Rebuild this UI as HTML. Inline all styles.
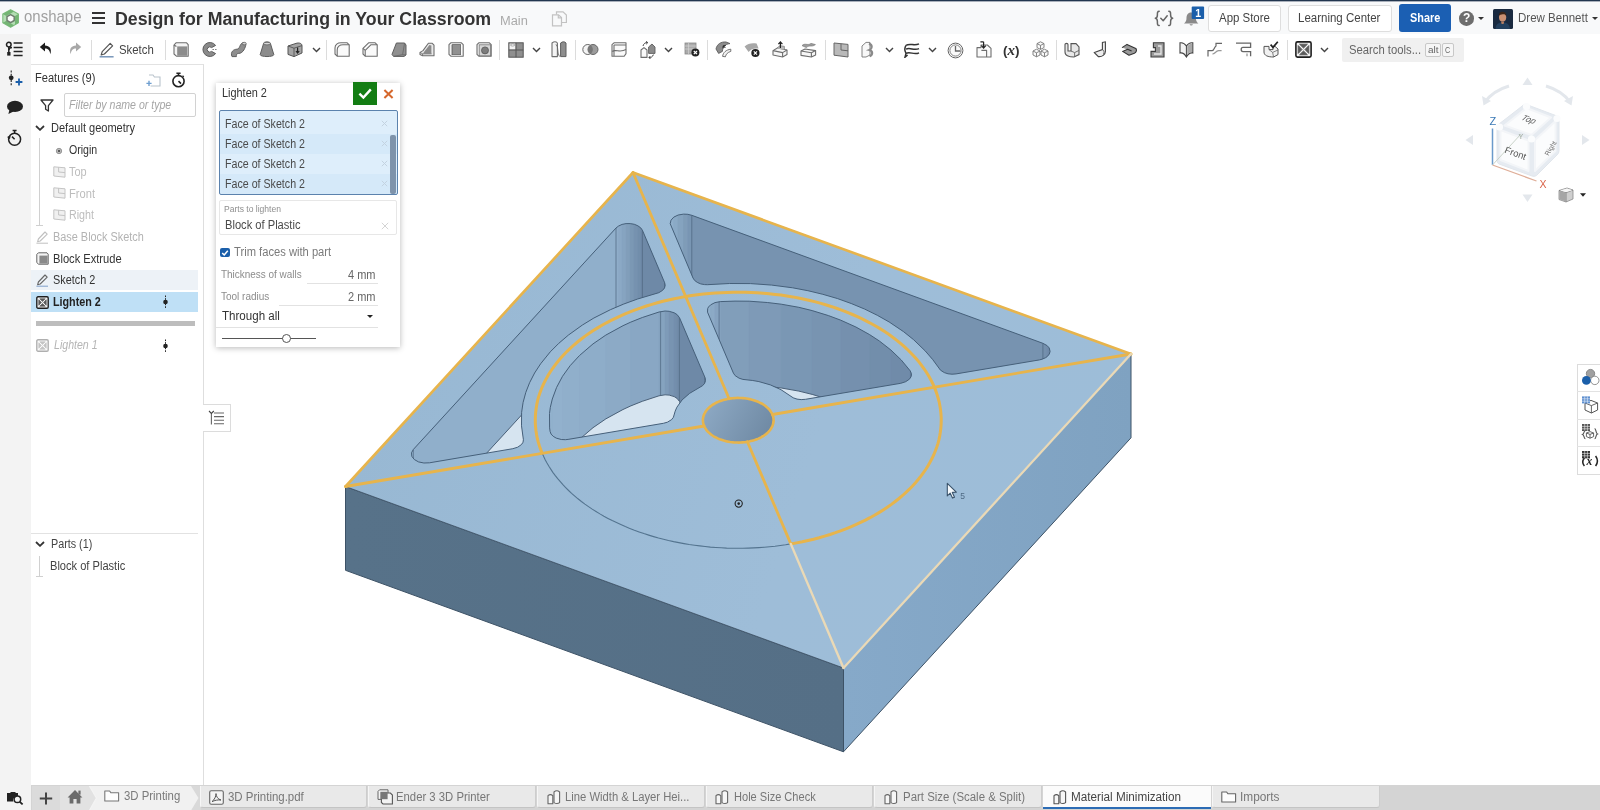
<!DOCTYPE html>
<html lang="en">
<head>
<meta charset="utf-8">
<title>Design for Manufacturing in Your Classroom</title>
<style>
*{box-sizing:border-box;margin:0;padding:0}
html,body{width:1600px;height:810px;overflow:hidden;background:#fff;font-family:"Liberation Sans",sans-serif;color:#333}
.abs{position:absolute}
#app{position:relative;width:1600px;height:810px;overflow:hidden;will-change:transform}
/* top */
#topline{left:0;top:0;width:1600px;height:2px;background:linear-gradient(#22364f 0,#22364f 1px,#a9b0bb 1px,#a9b0bb 2px)}
#topbar{left:0;top:2px;width:1600px;height:32px;background:#f8f9fa}
#toolbar{left:31px;top:34px;width:1569px;height:31px;background:#fff}
#leftcol{left:0;top:34px;width:31px;height:776px;background:#f3f3f3}
#fpanel{left:31px;top:64px;width:173px;height:721.5px;background:#fff;border-right:1.5px solid #dedede;border-top:1.5px solid #e2e2e2}
#tabbar{left:31px;top:785px;width:1569px;height:25px;background:#d4d4d4}
.t{position:absolute;white-space:nowrap;line-height:1;transform-origin:0 50%}
</style>
</head>
<body>
<div id="app">
<div class="abs" id="topline"></div>
<div class="abs" id="topbar"></div>
<div class="abs" id="leftcol"></div>
<div class="abs" id="toolbar"></div>
<div class="abs" id="fpanel"></div>
<div class="abs" id="tabbar"></div>
<svg class="abs" style="left:1.5px;top:8.5px" width="17.5" height="19" viewBox="0 0 17.5 19"><path d="M8.6,0.7 L16.4,5 L16.4,13.8 L8.6,18.3 L0.8,13.8 L0.8,5Z" fill="#b4deb4" stroke="#7dbd7d" stroke-width="1.1" stroke-linejoin="round"/><path d="M0.8,5 L8.6,0.7 L12,2.6 L4.4,7Z M16.4,5 L16.4,13.8 L13,15.8 L13,7Z M0.8,13.8 L8.6,18.3 L12,16.2 L4.4,11.8Z" fill="#74b574"/><path d="M8.6,5.6 L12.2,7.7 L12.2,11.5 L8.6,13.6 L5,11.5 L5,7.7Z" fill="#fbfbfb" stroke="#6f7f6f" stroke-width="1.5" stroke-linejoin="round"/></svg>
<span class="t" style="left:23.5px;top:7.5px;font-size:17px;color:#a0a0a0;transform:scaleX(0.882);">onshape</span>
<div class="abs" style="left:92px;top:12px;width:13px;height:2px;background:#333;box-shadow:0 5px 0 #333,0 10px 0 #333"></div>
<span class="t" style="left:115.2px;top:9.6px;font-size:18.3px;color:#333;font-weight:bold;transform:scaleX(0.971);">Design for Manufacturing in Your Classroom</span>
<span class="t" style="left:499.8px;top:14.8px;font-size:12px;color:#aaa;transform:scaleX(1.069);">Main</span>
<svg class="abs" style="left:551px;top:11px" width="17" height="16" viewBox="0 0 17 16"><g fill="none" stroke="#c2c2c2" stroke-width="1.2"><path d="M5.5,3.5 L5.5,0.8 L12,0.8 L15.4,4 L15.4,11.5 L10.5,11.5"/><path d="M1.5,3.8 L7.5,3.8 L10.5,6.6 L10.5,14.8 L1.5,14.8Z"/><path d="M7.3,4 L7.3,6.8 L10.3,6.8"/></g></svg>
<svg class="abs" style="left:1154px;top:10px" width="20" height="17" viewBox="0 0 20 17"><g fill="none" stroke="#666" stroke-width="1.5" stroke-linecap="round" stroke-linejoin="round"><path d="M5.2,1.2 C3.2,1.2 3.4,3 3.4,5 C3.4,7 3,8 1.4,8.3 C3,8.6 3.4,9.6 3.4,11.6 C3.4,13.6 3.2,15.6 5.2,15.6"/><path d="M14.8,1.2 C16.8,1.2 16.6,3 16.6,5 C16.6,7 17,8 18.6,8.3 C17,8.6 16.6,9.6 16.6,11.6 C16.6,13.6 16.8,15.6 14.8,15.6"/><path d="M6.8,8.2 L9.2,10.8 L13.2,5.8"/></g></svg>
<svg class="abs" style="left:1183px;top:6px" width="23" height="21" viewBox="0 0 23 21"><path d="M8.2,6.5 C11.6,6.5 12.9,9 12.9,12 C12.9,15 13.8,16.2 15.4,17.4 L1,17.4 C2.6,16.2 3.5,15 3.5,12 C3.5,9 4.8,6.5 8.2,6.5Z" fill="#8a8a8a"/><path d="M6.5,18.2 A1.8,1.8 0 0 0 9.9,18.2Z" fill="#8a8a8a"/><rect x="8.7" y="0.5" width="12.4" height="12.6" rx="1" fill="#1b5faa"/></svg>
<span class="t" style="left:1195.3px;top:7.7px;font-size:10.5px;color:#fff;font-weight:bold;">1</span>
<div class="abs" style="left:1208px;top:4.5px;width:73px;height:27px;background:#fff;border:1px solid #dedede;border-radius:3px"></div>
<span class="t" style="left:1219.1px;top:11.7px;font-size:12px;color:#444;transform:scaleX(0.954);">App Store</span>
<div class="abs" style="left:1288px;top:4.5px;width:104px;height:27px;background:#fff;border:1px solid #dedede;border-radius:3px"></div>
<span class="t" style="left:1298.4px;top:11.7px;font-size:12px;color:#444;transform:scaleX(0.958);">Learning Center</span>
<div class="abs" style="left:1399px;top:4px;width:51.5px;height:28px;background:#1b5fb3;border-radius:3px"></div>
<span class="t" style="left:1409.7px;top:11.6px;font-size:12px;color:#fff;font-weight:bold;transform:scaleX(0.906);">Share</span>
<div class="abs" style="left:1459px;top:11px;width:14.6px;height:14.6px;border-radius:50%;background:#6d6d6d"></div>
<span class="t" style="left:1462.9px;top:12.4px;font-size:12px;color:#fff;font-weight:bold;">?</span>
<div class="abs" style="left:1478px;top:17px;border:3px solid transparent;border-top:3.4px solid #333;border-bottom:0"></div>
<svg class="abs" style="left:1492.6px;top:8.5px" width="20" height="20" viewBox="0 0 20 20"><rect width="20" height="20" rx="1.5" fill="#1a2a40"/><ellipse cx="9.6" cy="8.2" rx="3.6" ry="4.4" fill="#c98f72"/><path d="M5.8,7 C5.6,3.4 8,2.6 10,2.8 C12.4,3 13.6,4.6 13.3,7.2 C12.6,5.6 11.6,5 9.8,5.2 C8,5.3 6.6,5.6 5.8,7Z" fill="#3a2418"/><path d="M2.5,20 C2.8,15 5.6,13.6 9.6,13.6 C13.6,13.6 16.4,15 17,20Z" fill="#24405e"/><path d="M8,12.4 L11.2,12.4 L10.6,15 L8.6,15Z" fill="#b57d62"/></svg>
<span class="t" style="left:1517.6px;top:11.5px;font-size:12px;color:#555;transform:scaleX(0.961);">Drew Bennett</span>
<div class="abs" style="left:1592px;top:17px;border:3.3px solid transparent;border-top:3.6px solid #333;border-bottom:0"></div>
<svg class="abs" style="left:5px;top:41px" width="19" height="16" viewBox="0 0 19 16"><g fill="none" stroke="#222" stroke-width="1.5"><circle cx="3.8" cy="3.6" r="2.3"/><path d="M3.8,6 L3.8,11.2"/><path d="M3.8,9 C3.8,7 5,6.6 7,6.6"/><path d="M8.6,2 L17.6,2 M8.6,6.6 L17.6,6.6 M8.6,10.6 L17.6,10.6 M8.6,14.4 L17.6,14.4"/></g><rect x="2.2" y="11" width="3.3" height="3.6" fill="#222"/></svg>
<svg class="abs" style="left:7px;top:69px" width="17" height="19" viewBox="0 0 17 19"><circle cx="4.2" cy="8.8" r="2.4" fill="#222"/><path d="M4.2,1.5 L4.2,17.5" stroke="#222" stroke-width="1.1" stroke-dasharray="2 1.2"/><path d="M12,9.6 L12,16.4 M8.6,13 L15.4,13" stroke="#1b5faa" stroke-width="1.8"/></svg>
<svg class="abs" style="left:6px;top:99.5px" width="18" height="15" viewBox="0 0 18 15"><ellipse cx="9" cy="6.4" rx="8" ry="5.6" fill="#222"/><path d="M3.5,9.5 L2.4,14 L8,11.2Z" fill="#222"/></svg>
<svg class="abs" style="left:6px;top:129px" width="17" height="18" viewBox="0 0 17 18"><g fill="none" stroke="#222" stroke-width="1.5"><circle cx="8.6" cy="10.2" r="6"/><path d="M6.6,1.6 L10.6,1.6 M8.6,1.6 L8.6,4 M8.6,10.2 L6,7.6"/></g><path d="M1,8 L4.6,6.4 L4,10.2Z" fill="#222"/></svg>
<svg class="abs" style="left:39px;top:42px" width="14" height="13" viewBox="0 0 14 13"><path d="M6,0.6 L0.8,5 L6,9.4 L6,6.6 C9,6.6 10.6,8 11.4,12.2 C13,6.6 10.6,3.6 6,3.4Z" fill="#1c1c1c"/></svg>
<svg class="abs" style="left:68px;top:42px" width="14" height="13" viewBox="0 0 14 13"><path d="M8,0.6 L13.2,5 L8,9.4 L8,6.6 C5,6.6 3.4,8 2.6,12.2 C1,6.6 3.4,3.6 8,3.4Z" fill="#a8a8a8"/></svg>
<div class="abs" style="left:90.5px;top:40px;width:1px;height:20px;background:#dcdcdc"></div>
<svg class="abs" style="left:99px;top:42px" width="16" height="16" viewBox="0 0 16 16"><g fill="none" stroke="#555" stroke-width="1.2" stroke-linejoin="round"><path d="M11.2,1.4 L13.6,3.8 L5.4,12 L2.2,13 L3.2,9.6Z"/></g><path d="M0.6,14.8 L14.6,14.8" stroke="#6f8fb5" stroke-width="1.4"/></svg>
<span class="t" style="left:118.6px;top:43.6px;font-size:12px;color:#444;transform:scaleX(0.949);">Sketch</span>
<div class="abs" style="left:165px;top:40px;width:1px;height:20px;background:#dcdcdc"></div>
<svg class="abs" style="left:173px;top:42px" width="16" height="15" viewBox="0 0 16 15"><path d="M1,3 L3,0.8 L13.6,0.8 L15.2,2.6 L15.2,14.2 L3.4,14.2 L1,12Z" fill="#f4f4f4" fill="none" stroke="#6e6e6e" stroke-width="1.1" stroke-linejoin="round"/><rect x="4.2" y="4.4" width="10" height="9.4" fill="#8c8c8c"/><path d="M1,3 L3.4,4.4" fill="none" stroke="#6e6e6e" stroke-width="1.1" stroke-linejoin="round"/></svg>
<svg class="abs" style="left:202px;top:42px" width="16" height="15" viewBox="0 0 16 15"><path d="M13.6,3.4 A7,7 0 1 0 13.6,11.6 L9.6,9.4 A2.6,2.6 0 1 1 9.6,5.6Z" fill="#8a8a8a" stroke="#5c5c5c" stroke-width="1"/><path d="M10.4,7.5 L15.4,7.5" stroke="#777" stroke-width="0.9" stroke-dasharray="1.6 1"/></svg>
<svg class="abs" style="left:230px;top:41px" width="17" height="17" viewBox="0 0 17 17"><path d="M2,15.6 C0,11 3.6,8.2 7,8.2 C10,8.2 9.4,3.2 12.6,1.8 L16,3.2 C15.4,6.2 13.4,12.4 8.6,12.4 C6.6,12.4 6.2,14 6.4,15.6Z" fill="#8e8e8e" stroke="#5e5e5e" stroke-width="1"/><ellipse cx="14.2" cy="2.6" rx="2" ry="1.3" fill="#cfcfcf" stroke="#5e5e5e" stroke-width="0.8"/></svg>
<svg class="abs" style="left:259px;top:41px" width="16" height="17" viewBox="0 0 16 17"><path d="M4.6,2.4 C4.6,0.4 11.4,0.4 11.4,2.4 L14.8,13.6 C14.8,16.2 1.2,16.2 1.2,13.6Z" fill="#8c8c8c" stroke="#5e5e5e" stroke-width="1"/><ellipse cx="8" cy="2.6" rx="3.3" ry="1.3" fill="#d9d9d9" stroke="#5e5e5e" stroke-width="0.8"/></svg>
<svg class="abs" style="left:287px;top:41px" width="16" height="17" viewBox="0 0 16 17"><path d="M1,5 L9,2.4 C12,1.4 15,2.4 15,4.6 L15,12 L7,15.6 L1,13.4Z" fill="#a5a5a5" stroke="#555" stroke-width="1"/><path d="M1,5 L7,7.2 L15,4.6 M7,7.2 L7,15.6" fill="none" stroke="#555" stroke-width="0.9"/><path d="M10.6,6.6 L10.6,11.6 M9,10 L10.6,12 L12.2,10" fill="none" stroke="#222" stroke-width="1.2"/></svg>
<svg class="abs" style="left:311.5px;top:47px" width="9" height="6" viewBox="0 0 9 6"><path d="M1,1 L4.5,4.6 L8,1" fill="none" stroke="#444" stroke-width="1.4"/></svg>
<div class="abs" style="left:325.5px;top:40px;width:1px;height:20px;background:#dcdcdc"></div>
<svg class="abs" style="left:333.5px;top:42px" width="16" height="15" viewBox="0 0 16 15"><path d="M1,6 C1,2.6 3.6,0.8 7,0.8 L13.2,0.8 L15.2,2.8 L15.2,14.2 L3.2,14.2 L1,12Z" fill="#fafafa" fill="none" stroke="#6e6e6e" stroke-width="1.1" stroke-linejoin="round"/><path d="M3.2,14.2 L3.2,8 C3.2,4.6 5.6,2.8 9,2.8 L15.2,2.8" fill="none" stroke="#6e6e6e" stroke-width="1.1" stroke-linejoin="round"/></svg>
<svg class="abs" style="left:362px;top:42px" width="16" height="15" viewBox="0 0 16 15"><path d="M1,6.4 L6.6,0.8 L13.2,0.8 L15.2,2.8 L15.2,14.2 L3.2,14.2 L1,12Z" fill="#fafafa" fill="none" stroke="#6e6e6e" stroke-width="1.1" stroke-linejoin="round"/><path d="M3.2,14.2 L3.2,8.4 L8.8,2.8 L15.2,2.8 M1,6.4 L3.2,8.4" fill="none" stroke="#6e6e6e" stroke-width="1.1" stroke-linejoin="round"/></svg>
<svg class="abs" style="left:391px;top:42px" width="16" height="15" viewBox="0 0 16 15"><path d="M5.4,1 L13.6,1 L15,3 L15,13 L13,14.4 L2.6,14.4 L1,12.4Z" fill="#909090" stroke="#5e5e5e" stroke-width="1"/><path d="M13.6,1 L11.6,12.6 L2.6,14.4 M11.6,12.6 L15,13" fill="none" stroke="#666" stroke-width="0.8"/></svg>
<svg class="abs" style="left:419px;top:42px" width="16" height="15" viewBox="0 0 16 15"><path d="M1,10.4 L4,8.6 L9.4,1.2 L13,1.2 L15,3.2 L15,13.8 L3.6,13.8 L1,12.4Z" fill="#e9e9e9" fill="none" stroke="#6e6e6e" stroke-width="1.1" stroke-linejoin="round"/><path d="M4.6,10.4 L10.4,3 L12.4,3.4 L12.4,11.6 L4.6,11.6Z" fill="#8a8a8a"/><path d="M1,10.4 L3.6,11.8 L3.6,13.8 M3.6,11.8 L12.6,11.8" fill="none" stroke="#666" stroke-width="0.8"/></svg>
<svg class="abs" style="left:447.5px;top:42px" width="16" height="15" viewBox="0 0 16 15"><path d="M1,2.6 L2.8,0.8 L13.4,0.8 L15.2,2.6 L15.2,14.2 L2.8,14.2 L1,12.4Z" fill="#fafafa" fill="none" stroke="#6e6e6e" stroke-width="1.1" stroke-linejoin="round"/><rect x="4.4" y="2.6" width="8.2" height="10" fill="#909090" stroke="#666" stroke-width="0.8"/><path d="M3.4,2.6 L3.4,13.2" stroke="#999" stroke-width="0.8"/></svg>
<svg class="abs" style="left:475.5px;top:42px" width="16" height="15" viewBox="0 0 16 15"><path d="M1,2.6 L2.8,0.8 L13.4,0.8 L15.2,2.6 L15.2,14.2 L2.8,14.2 L1,12.4Z" fill="#f2f2f2" fill="none" stroke="#6e6e6e" stroke-width="1.1" stroke-linejoin="round"/><rect x="3.2" y="2.8" width="11.4" height="11" fill="#d5d5d5" stroke="#777" stroke-width="0.8"/><circle cx="9" cy="8.4" r="3.5" fill="#7c7c7c" stroke="#555" stroke-width="0.8"/></svg>
<div class="abs" style="left:498.5px;top:40px;width:1px;height:20px;background:#dcdcdc"></div>
<svg class="abs" style="left:508px;top:41.5px" width="16" height="16" viewBox="0 0 16 16"><rect x="0.8" y="0.8" width="14.4" height="14.4" fill="#8f8f8f" stroke="#555" stroke-width="1"/><rect x="1.6" y="1.6" width="6" height="6" fill="#f2f2f2"/><path d="M8,0.8 L8,15.2 M0.8,8 L15.2,8" stroke="#555" stroke-width="1"/><ellipse cx="4.6" cy="3" rx="2.2" ry="1" fill="#fff" stroke="#777" stroke-width="0.6"/></svg>
<svg class="abs" style="left:532px;top:47px" width="9" height="6" viewBox="0 0 9 6"><path d="M1,1 L4.5,4.6 L8,1" fill="none" stroke="#444" stroke-width="1.4"/></svg>
<svg class="abs" style="left:551px;top:41px" width="16" height="17" viewBox="0 0 16 17"><path d="M1,2 C3,0.4 5,0.4 6.4,2 L6.4,15.6 L1,15.6Z" fill="#f4f4f4" fill="none" stroke="#6e6e6e" stroke-width="1.1" stroke-linejoin="round"/><path d="M9.6,2 C11.6,0.4 13.6,0.4 15,2 L15,15.6 L9.6,15.6Z" fill="#8e8e8e" stroke="#5e5e5e" stroke-width="1"/><path d="M5,3.4 C8,6 5.6,11 8.4,15.6" fill="none" stroke="#666" stroke-width="0.9"/></svg>
<div class="abs" style="left:575px;top:40px;width:1px;height:20px;background:#dcdcdc"></div>
<svg class="abs" style="left:582px;top:43px" width="17" height="13" viewBox="0 0 17 13"><circle cx="5.8" cy="6.5" r="5" fill="#f4f4f4" stroke="#666" stroke-width="1"/><circle cx="11" cy="6.5" r="5" fill="#9c9c9c" stroke="#666" stroke-width="1"/><path d="M8.4,2.2 A5,5 0 0 1 8.4,10.8 A5,5 0 0 1 8.4,2.2Z" fill="#777"/></svg>
<svg class="abs" style="left:611px;top:42px" width="16" height="15" viewBox="0 0 16 15"><path d="M1,2.6 L3,0.8 L15,0.8 L15,11.6 L13.2,14.2 L1,14.2Z" fill="#fafafa" fill="none" stroke="#6e6e6e" stroke-width="1.1" stroke-linejoin="round"/><path d="M3,3 L15,3 M3,3 L3,14 M1,9.4 C5,7 9,11 15,7.6" fill="none" stroke="#6e6e6e" stroke-width="1.1" stroke-linejoin="round"/></svg>
<svg class="abs" style="left:639.5px;top:40.5px" width="16" height="18" viewBox="0 0 16 18"><path d="M1,9 L1,16.4 L7,16.4 L7,9 L4,6.6Z" fill="#fafafa" fill="none" stroke="#6e6e6e" stroke-width="1.1" stroke-linejoin="round"/><path d="M8.6,6 L12,3 L15,6 L15,12.4 L8.6,12.4Z" fill="#8c8c8c" stroke="#5e5e5e" stroke-width="0.9"/><path d="M3,5 C3.6,2.6 5.4,1.4 7.4,1.6 M6,0.4 L7.8,1.6 L6.2,3.2 M13.4,13.6 C12.8,15.6 11,16.8 9,16.6 M10.6,17.8 L8.8,16.6 L10.4,15" fill="none" stroke="#444" stroke-width="1"/></svg>
<svg class="abs" style="left:664px;top:47px" width="9" height="6" viewBox="0 0 9 6"><path d="M1,1 L4.5,4.6 L8,1" fill="none" stroke="#444" stroke-width="1.4"/></svg>
<svg class="abs" style="left:683.5px;top:42px" width="16" height="15" viewBox="0 0 16 15"><rect x="1" y="1" width="11" height="11" fill="#ababab" stroke="#888" stroke-width="0.8"/><path d="M1,4 L12,4 M1,7 L12,7 M4.6,1 L4.6,12" stroke="#d5d5d5" stroke-width="0.7"/><circle cx="11.4" cy="10.6" r="4" fill="#222"/><path d="M9.8,9 L13,12.2 M13,9 L9.8,12.2" stroke="#fff" stroke-width="1.2"/></svg>
<div class="abs" style="left:706.5px;top:40px;width:1px;height:20px;background:#dcdcdc"></div>
<svg class="abs" style="left:714.5px;top:41px" width="17" height="17" viewBox="0 0 17 17"><path d="M1,8 C2,3 6,0.6 11,1 L15,2.6 C10,3 7.6,6 7.4,10.4 L3.6,12.4Z" fill="#8c8c8c" stroke="#5e5e5e" stroke-width="0.9"/><path d="M7.6,15.4 C8,11.6 11,8.8 15.8,8.2 L15.8,10.4 C12.6,11.4 11,13 10.4,15.8Z" fill="#f2f2f2" stroke="#666" stroke-width="0.9"/><path d="M8.4,5 L10.4,7 M8,7.4 L8.2,4.8 L10.8,4.6" fill="none" stroke="#222" stroke-width="1"/></svg>
<svg class="abs" style="left:743.5px;top:41.5px" width="16" height="16" viewBox="0 0 16 16"><path d="M0.6,4.6 C4,1.4 8,0.8 12.6,1.6 L14.6,6.6 C10,6 7,7 4.6,10Z" fill="#a8a8a8"/><circle cx="11.4" cy="11" r="4.1" fill="#222"/><path d="M9.8,9.4 L13,12.6 M13,9.4 L9.8,12.6" stroke="#fff" stroke-width="1.2"/></svg>
<svg class="abs" style="left:772px;top:41px" width="16" height="17" viewBox="0 0 16 17"><path d="M1,9.6 L5.4,7 L15,9 L15,13.6 L10.6,16 L1,14Z" fill="#f6f6f6" fill="none" stroke="#6e6e6e" stroke-width="1.1" stroke-linejoin="round"/><path d="M1,9.6 L10.6,11.6 L15,9 M10.6,11.6 L10.6,16" fill="none" stroke="#6e6e6e" stroke-width="1.1" stroke-linejoin="round"/><path d="M4.6,7.4 L8,4.6 L12.4,5.4 L12.4,8.4" fill="#bbb" stroke="#777" stroke-width="0.7"/><path d="M8.4,7 L8.4,1.4 M6.4,3.2 L8.4,1 L10.4,3.2" fill="none" stroke="#222" stroke-width="1.2"/></svg>
<svg class="abs" style="left:799.5px;top:41px" width="17" height="17" viewBox="0 0 17 17"><path d="M1,10 L5,8 L15.6,9.6 L15.6,14 L11.4,16 L1,14.4Z" fill="#f6f6f6" fill="none" stroke="#6e6e6e" stroke-width="1.1" stroke-linejoin="round"/><path d="M1,10 L11.4,11.8 L15.6,9.6 M11.4,11.8 L11.4,16" fill="none" stroke="#6e6e6e" stroke-width="1.1" stroke-linejoin="round"/><path d="M2,4.6 C5,1.6 8,5 11,2.4 L15.4,3.6 C12,6.4 9,3.6 6.4,6.6Z" fill="#9d9d9d" stroke="#777" stroke-width="0.7"/></svg>
<div class="abs" style="left:824.5px;top:40px;width:1px;height:20px;background:#dcdcdc"></div>
<svg class="abs" style="left:832.5px;top:41.5px" width="16" height="16" viewBox="0 0 16 16"><path d="M1,1 L15,2.4 L15,15 L1,13.2Z" fill="#b9b9b9" stroke="#666" stroke-width="1"/><path d="M8,1.8 L8,8 L15,8.8" fill="none" stroke="#666" stroke-width="1"/></svg>
<svg class="abs" style="left:861px;top:41px" width="14" height="17" viewBox="0 0 14 17"><path d="M1,5 L5,1.4 L9,1.4 L9,14 L5,16 L1,16Z" fill="#f8f8f8" stroke="#777" stroke-width="0.9"/><path d="M8,2.6 C12,4 11,8 8.4,9 C12,10 12,13.6 8.6,15.4" fill="none" stroke="#8a8a8a" stroke-width="2.2"/></svg>
<svg class="abs" style="left:884.5px;top:47px" width="9" height="6" viewBox="0 0 9 6"><path d="M1,1 L4.5,4.6 L8,1" fill="none" stroke="#444" stroke-width="1.4"/></svg>
<svg class="abs" style="left:903.5px;top:41.5px" width="16" height="16" viewBox="0 0 16 16"><g fill="none" stroke="#333" stroke-width="1.5"><path d="M2,3.4 C6,0.6 10,4.4 15,1.8"/><path d="M2,7.2 C6,5 10,9 15,6.6"/><path d="M2,11.4 C6,9 10,13.4 15,10.8"/><path d="M2,3.4 C0.4,6 0.6,9 2,11.4 L1,15.2 L3.6,13"/></g></svg>
<svg class="abs" style="left:928px;top:47px" width="9" height="6" viewBox="0 0 9 6"><path d="M1,1 L4.5,4.6 L8,1" fill="none" stroke="#444" stroke-width="1.4"/></svg>
<svg class="abs" style="left:946.5px;top:41.5px" width="17" height="17" viewBox="0 0 17 17"><circle cx="8.5" cy="8.5" r="7.4" fill="#fafafa" stroke="#666" stroke-width="1"/><circle cx="8.5" cy="8.5" r="5.6" fill="none" stroke="#777" stroke-width="0.9"/><path d="M8.5,4 L8.5,9 L13.4,9" fill="none" stroke="#666" stroke-width="1.3"/></svg>
<svg class="abs" style="left:976px;top:41px" width="16" height="17" viewBox="0 0 16 17"><path d="M1,6.6 L5,6.6 L5,4 L11.4,4 L15,7.4 L15,16 L1,16Z" fill="#fafafa" fill="none" stroke="#6e6e6e" stroke-width="1.1" stroke-linejoin="round"/><path d="M5.4,9.4 L10.6,9.4 L10.6,16" fill="none" stroke="#6e6e6e" stroke-width="1.1" stroke-linejoin="round"/><path d="M4.4,0.8 L7.6,0.8 M7.6,0.8 L7.6,6.4 M5.4,4.6 L7.6,7 L9.8,4.6" fill="none" stroke="#222" stroke-width="1.2"/></svg>
<span class="t" style="left:1003px;top:42.5px;font-size:13.5px;color:#333;font-weight:bold">(<i style="font-family:'Liberation Serif',serif;font-size:15px">x</i>)</span>
<svg class="abs" style="left:1031.5px;top:41px" width="17" height="17" viewBox="0 0 17 17"><g fill="#fafafa" stroke="#777" stroke-width="0.9" stroke-linejoin="round"><path d="M8.5,0.8 L12,2.6 L12,6.6 L8.5,8.4 L5,6.6 L5,2.6Z"/><path d="M4.5,8.2 L8,10 L8,14 L4.5,15.8 L1,14 L1,10Z"/><path d="M12.5,8.2 L16,10 L16,14 L12.5,15.8 L9,14 L9,10Z"/><path d="M5,2.6 L8.5,4.4 L12,2.6 M8.5,4.4 L8.5,8.4 M1,10 L4.5,11.8 L8,10 M4.5,11.8 L4.5,15.8 M9,10 L12.5,11.8 L16,10 M12.5,11.8 L12.5,15.8" fill="none"/></g></svg>
<div class="abs" style="left:1056px;top:40px;width:1px;height:20px;background:#dcdcdc"></div>
<svg class="abs" style="left:1063.5px;top:41.5px" width="16" height="16" viewBox="0 0 16 16"><path d="M1,2.4 C1,1 4,1 4,2.4 L4,9 L7,9 L7,1.6 L12,1.6 L15,5 L15,12.6 L10,15 C6,15 1,14 1,10Z" fill="#e8e8e8" stroke="#555" stroke-width="1.1"/><path d="M7,9 L10.6,10.6 L15,8.4 M10.6,10.6 L10.6,14.8" fill="none" stroke="#666" stroke-width="0.9"/></svg>
<svg class="abs" style="left:1092.5px;top:41px" width="16" height="17" viewBox="0 0 16 17"><path d="M1.4,11.6 L9.4,8.6 L9.4,1.4 L12.4,0.8 L12.4,10.6 C12.4,13.6 9,16 5.4,15.6Z" fill="#ededed" stroke="#444" stroke-width="1.1"/><path d="M9.4,8.6 C11,9.4 11.4,11 10.6,13" fill="none" stroke="#555" stroke-width="0.9"/></svg>
<svg class="abs" style="left:1121px;top:43px" width="16" height="13" viewBox="0 0 16 13"><path d="M1,4.6 L6,1.4 L14.8,5.4 C16,7 15.4,9.4 13.4,10.2 L8,12.2 L1.6,8.4 L6.6,6.2 L10.6,8" fill="#9a9a9a" stroke="#333" stroke-width="1.1" stroke-linejoin="round"/></svg>
<svg class="abs" style="left:1150px;top:41.5px" width="15" height="16" viewBox="0 0 15 16"><path d="M3.4,0.8 L14,0.8 L14,15 L1,15 L1,9.4 L5.4,9.4 L5.4,5.6 L3.4,5.6Z" fill="#9a9a9a" stroke="#3c3c3c" stroke-width="1.1"/><path d="M8,4 L11,4 L11,12 L4,12" fill="none" stroke="#e8e8e8" stroke-width="1.3"/></svg>
<svg class="abs" style="left:1178.5px;top:41px" width="15" height="17" viewBox="0 0 15 17"><path d="M7.4,5 C5.4,2 3,1.4 1,1.8 L1,12 C3.4,11.6 5.6,12.6 7.4,16 C9.2,12.6 11.4,11.6 13.8,12 L13.8,1.8 C11.8,1.4 9.4,2 7.4,5Z" fill="#f3f3f3" stroke="#444" stroke-width="1.1"/><path d="M7.4,5 L7.4,16" stroke="#444" stroke-width="1"/><path d="M8.2,5.6 C9.6,3.6 11.4,2.6 13,2.6 L13,11 C11.2,11 9.6,12 8.2,14Z" fill="#a9a9a9"/></svg>
<svg class="abs" style="left:1206.5px;top:42px" width="16" height="15" viewBox="0 0 16 15"><g fill="none" stroke="#666" stroke-width="1.2"><path d="M1,14.4 L1,8.6 L5,8.6 C7.6,8.6 7,5 9,4 L9,1.4 L15,1.4"/><path d="M5.4,12 C8,12 8.6,9 11.6,8.6 L14.6,8.6" stroke="#999"/></g></svg>
<svg class="abs" style="left:1234.5px;top:42px" width="17" height="15" viewBox="0 0 17 15"><g fill="none" stroke="#666" stroke-width="1.3"><path d="M1,1.2 L15.6,1.2 L15.6,5.4 L8,5.4 C5.6,5.4 5.6,9.6 8,9.6 L15.6,9.6 L15.6,14.2"/><path d="M12,14.2 L12,11.6" stroke="#999"/></g></svg>
<svg class="abs" style="left:1263px;top:41px" width="16" height="17" viewBox="0 0 16 17"><path d="M1,5.4 L6,5.4 L6,8.6 L10,8.6 L10,5.4 L12,5.4 L15,8 L15,13.6 L10.6,16 C5,16 1,14.6 1,11Z" fill="#f1f1f1" stroke="#555" stroke-width="1"/><path d="M6,8.6 L9.6,11.4 L15,9 M9.6,11.4 L10.6,16" fill="none" stroke="#666" stroke-width="0.8"/><path d="M7.6,3.6 L10,6.4 L14.8,0.8" fill="none" stroke="#222" stroke-width="1.7"/></svg>
<div class="abs" style="left:1286.5px;top:40px;width:1px;height:20px;background:#dcdcdc"></div>
<svg class="abs" style="left:1294.5px;top:41px" width="17" height="17" viewBox="0 0 17 17"><rect x="0.9" y="0.9" width="15.2" height="15.2" rx="1.6" fill="#f4f4f4" stroke="#1e1e1e" stroke-width="1.6"/><path d="M4.6,3.2 L12.4,3.2 L8.5,7Z M4.6,13.8 L12.4,13.8 L8.5,10Z M3.2,4.6 L3.2,12.4 L7,8.5Z M13.8,4.6 L13.8,12.4 L10,8.5Z" fill="#5a5a5a" stroke="#5a5a5a" stroke-width="1" stroke-linejoin="round"/></svg>
<svg class="abs" style="left:1319.5px;top:47px" width="9" height="6" viewBox="0 0 9 6"><path d="M1,1 L4.5,4.6 L8,1" fill="none" stroke="#444" stroke-width="1.4"/></svg>
<div class="abs" style="left:1341.5px;top:37.5px;width:122px;height:24.5px;background:#f0f0f0;border-radius:2px"></div>
<span class="t" style="left:1349.3px;top:44.0px;font-size:12px;color:#666;transform:scaleX(0.939);">Search tools...</span>
<div class="abs" style="left:1424.5px;top:43px;width:16.5px;height:14px;border:1px solid #c8c8c8;border-radius:2px;background:#f6f6f6"></div>
<span class="t" style="left:1427.6px;top:45.6px;font-size:8.5px;color:#666;transform:scaleX(1.181);">alt</span>
<div class="abs" style="left:1441.5px;top:43px;width:12.5px;height:14px;border:1px solid #c8c8c8;border-radius:2px;background:#f6f6f6"></div>
<span class="t" style="left:1445.4px;top:45.8px;font-size:8.5px;color:#666;transform:scaleX(0.847);">C</span>
<span class="t" style="left:34.8px;top:72.2px;font-size:12px;color:#333;transform:scaleX(0.924);">Features (9)</span>
<svg class="abs" style="left:144.5px;top:73.5px" width="16" height="13" viewBox="0 0 16 13"><path d="M4,1 L8,1 L9.4,3 L15,3 L15,12 L5.6,12" fill="none" stroke="#b9c3cc" stroke-width="1.1"/><path d="M4,6.8 L4,12 M1.4,9.4 L6.6,9.4" stroke="#6f9fd0" stroke-width="1.4"/></svg>
<svg class="abs" style="left:170.5px;top:71.5px" width="15" height="16" viewBox="0 0 15 16"><g fill="none" stroke="#222" stroke-width="1.6"><circle cx="7.5" cy="9.2" r="5.6"/><path d="M5.4,1.2 L9.6,1.2 M7.5,1.4 L7.5,3.6 M7.5,9.2 L10,11.6"/><path d="M11.6,3.6 L12.8,4.8" stroke-width="1.2"/></g></svg>
<svg class="abs" style="left:40px;top:98.5px" width="14" height="13" viewBox="0 0 14 13"><path d="M1,1 L13,1 L8.4,6.6 L8.4,12 L5.6,10.2 L5.6,6.6Z" fill="none" stroke="#333" stroke-width="1.3" stroke-linejoin="round"/></svg>
<div class="abs" style="left:64px;top:92.5px;width:132px;height:24.5px;border:1px solid #d2d2d2;border-radius:2px;background:#fff"></div>
<span class="t" style="left:68.8px;top:98.8px;font-size:12px;color:#a6a6a6;font-style:italic;transform:scaleX(0.881);">Filter by name or type</span>
<svg class="abs" style="left:35.2px;top:125px" width="10" height="6" viewBox="0 0 10 6"><path d="M1,1 L5,4.8 L9,1" fill="none" stroke="#333" stroke-width="1.8"/></svg>
<span class="t" style="left:51.0px;top:122.4px;font-size:12px;color:#333;transform:scaleX(0.919);">Default geometry</span>
<div class="abs" style="left:38.5px;top:138px;width:1px;height:88px;background:#d0d0d0"></div><div class="abs" style="left:36px;top:225px;width:7px;height:1px;background:#d0d0d0"></div>
<svg class="abs" style="left:55px;top:146.5px" width="8" height="8" viewBox="0 0 8 8"><circle cx="4" cy="4" r="2.7" fill="#bbb" stroke="#888" stroke-width="0.8"/><circle cx="4" cy="4" r="1.1" fill="#444"/></svg>
<span class="t" style="left:69.4px;top:143.9px;font-size:12px;color:#333;transform:scaleX(0.881);">Origin</span>
<svg class="abs" style="left:52.5px;top:165.5px" width="13" height="12" viewBox="0 0 13 12"><path d="M0.8,0.8 L12,1.8 L12,11.2 L0.8,10Z" fill="#f0f0f0" stroke="#c4c4c4" stroke-width="1"/><path d="M5.6,1.2 L5.6,6 L12,6.6" fill="none" stroke="#c4c4c4" stroke-width="1"/></svg>
<span class="t" style="left:69.4px;top:165.5px;font-size:12px;color:#bdbdbd;transform:scaleX(0.910);">Top</span>
<svg class="abs" style="left:52.5px;top:187.4px" width="13" height="12" viewBox="0 0 13 12"><path d="M0.8,0.8 L12,1.8 L12,11.2 L0.8,10Z" fill="#f0f0f0" stroke="#c4c4c4" stroke-width="1"/><path d="M5.6,1.2 L5.6,6 L12,6.6" fill="none" stroke="#c4c4c4" stroke-width="1"/></svg>
<span class="t" style="left:69.4px;top:187.5px;font-size:12px;color:#bdbdbd;transform:scaleX(0.928);">Front</span>
<svg class="abs" style="left:52.5px;top:209.3px" width="13" height="12" viewBox="0 0 13 12"><path d="M0.8,0.8 L12,1.8 L12,11.2 L0.8,10Z" fill="#f0f0f0" stroke="#c4c4c4" stroke-width="1"/><path d="M5.6,1.2 L5.6,6 L12,6.6" fill="none" stroke="#c4c4c4" stroke-width="1"/></svg>
<span class="t" style="left:69.4px;top:209.4px;font-size:12px;color:#bdbdbd;transform:scaleX(0.892);">Right</span>
<svg class="abs" style="left:36px;top:230.5px" width="13" height="13" viewBox="0 0 13 13"><path d="M9,1 L11.2,3.2 L4.2,10 L1.6,10.8 L2.4,8Z" fill="none" stroke="#c0c0c0" stroke-width="1.1" stroke-linejoin="round"/><path d="M0.4,12.2 L12,12.2" stroke="#c0c0c0" stroke-width="1"/></svg>
<span class="t" style="left:53.0px;top:231.0px;font-size:12px;color:#b3b3b3;transform:scaleX(0.908);">Base Block Sketch</span>
<svg class="abs" style="left:36px;top:251.5px" width="13" height="13" viewBox="0 0 13 13"><path d="M0.8,2.4 L2.4,0.8 L11,0.8 L12.2,2.2 L12.2,12.2 L2.6,12.2 L0.8,10.6Z" fill="#f4f4f4" stroke="#666" stroke-width="1"/><rect x="3.4" y="3.6" width="8.2" height="8" fill="#8a8a8a"/></svg>
<span class="t" style="left:53.0px;top:252.8px;font-size:12px;color:#333;transform:scaleX(0.927);">Block Extrude</span>
<div class="abs" style="left:31px;top:270px;width:167px;height:19.5px;background:#edf2f7"></div>
<svg class="abs" style="left:36px;top:274px" width="13" height="13" viewBox="0 0 13 13"><path d="M9,1 L11.2,3.2 L4.2,10 L1.6,10.8 L2.4,8Z" fill="none" stroke="#666" stroke-width="1.1" stroke-linejoin="round"/><path d="M0.4,12.2 L12,12.2" stroke="#7f9fc8" stroke-width="1"/></svg>
<span class="t" style="left:53.0px;top:274.3px;font-size:12px;color:#333;transform:scaleX(0.904);">Sketch 2</span>
<div class="abs" style="left:31px;top:292.3px;width:167px;height:19.5px;background:#bfe0f6"></div>
<svg class="abs" style="left:36px;top:295.5px" width="13" height="13" viewBox="0 0 13 13"><g opacity="1"><rect x="0.8" y="0.8" width="11.4" height="11.4" rx="1.2" fill="#f4f4f4" stroke="#1e1e1e" stroke-width="1.4"/><path d="M3.8,2.8 L9.2,2.8 L6.5,5.4Z M3.8,10.2 L9.2,10.2 L6.5,7.6Z M2.8,3.8 L2.8,9.2 L5.4,6.5Z M10.2,3.8 L10.2,9.2 L7.6,6.5Z" fill="#5a5a5a" stroke="#5a5a5a" stroke-width="0.7" stroke-linejoin="round"/></g></svg>
<span class="t" style="left:53.0px;top:296.1px;font-size:12px;color:#222;font-weight:bold;transform:scaleX(0.896);">Lighten 2</span>
<svg class="abs" style="left:162px;top:295px" width="7" height="14" viewBox="0 0 7 14"><circle cx="3.5" cy="7" r="2.3" fill="#222"/><path d="M3.5,0.5 L3.5,13.5" stroke="#222" stroke-width="1" stroke-dasharray="1.6 1.1"/></svg>
<div class="abs" style="left:36px;top:320.5px;width:158.5px;height:5.5px;background:#bdbdbd"></div>
<svg class="abs" style="left:36px;top:339px" width="13" height="13" viewBox="0 0 13 13"><g opacity="0.35"><rect x="0.8" y="0.8" width="11.4" height="11.4" rx="1.2" fill="#f4f4f4" stroke="#1e1e1e" stroke-width="1.4"/><path d="M3.8,2.8 L9.2,2.8 L6.5,5.4Z M3.8,10.2 L9.2,10.2 L6.5,7.6Z M2.8,3.8 L2.8,9.2 L5.4,6.5Z M10.2,3.8 L10.2,9.2 L7.6,6.5Z" fill="#5a5a5a" stroke="#5a5a5a" stroke-width="0.7" stroke-linejoin="round"/></g></svg>
<span class="t" style="left:54.4px;top:339.1px;font-size:12px;color:#b5b5b5;font-style:italic;transform:scaleX(0.883);">Lighten 1</span>
<svg class="abs" style="left:162px;top:338.5px" width="7" height="14" viewBox="0 0 7 14"><circle cx="3.5" cy="7" r="2.3" fill="#222"/><path d="M3.5,0.5 L3.5,13.5" stroke="#222" stroke-width="1" stroke-dasharray="1.6 1.1"/></svg>
<div class="abs" style="left:31px;top:532.5px;width:167px;height:1px;background:#e2e2e2"></div>
<svg class="abs" style="left:35.2px;top:541px" width="10" height="6" viewBox="0 0 10 6"><path d="M1,1 L5,4.8 L9,1" fill="none" stroke="#333" stroke-width="1.8"/></svg>
<span class="t" style="left:50.7px;top:538.3px;font-size:12px;color:#444;transform:scaleX(0.896);">Parts (1)</span>
<div class="abs" style="left:38.5px;top:556px;width:1px;height:21px;background:#d0d0d0"></div><div class="abs" style="left:36px;top:576px;width:7px;height:1px;background:#d0d0d0"></div>
<span class="t" style="left:50.0px;top:559.8px;font-size:12px;color:#444;transform:scaleX(0.924);">Block of Plastic</span>
<div class="abs" style="left:203px;top:404px;width:27.5px;height:28px;background:#fff;border:1px solid #dcdcdc;border-left:0"></div>
<svg class="abs" style="left:208px;top:410px" width="17" height="16" viewBox="0 0 17 16"><g fill="none" stroke="#666" stroke-width="1.1"><path d="M6,3 L16,3 M6,6.6 L16,6.6 M6,10.2 L16,10.2 M6,13.8 L16,13.8"/><path d="M3.4,3 L3.4,14.4"/><path d="M1,1 L3.4,3.4 L5.8,1" stroke="#444"/></g></svg>
<div class="abs" style="left:216px;top:82.5px;width:184px;height:264.5px;background:#fff;box-shadow:0 1px 6px rgba(0,0,0,0.28)"></div>
<span class="t" style="left:221.6px;top:87.4px;font-size:12px;color:#333;transform:scaleX(0.909);">Lighten 2</span>
<div class="abs" style="left:353px;top:81.5px;width:24px;height:23.5px;background:#137d13"></div>
<svg class="abs" style="left:353px;top:81.5px" width="24" height="24" viewBox="0 0 24 24"><path d="M6.4,11.6 L10.4,15.6 L17.8,7.4" fill="none" stroke="#fff" stroke-width="2.4"/></svg>
<svg class="abs" style="left:383px;top:88.5px" width="11" height="10" viewBox="0 0 11 10"><path d="M1.4,1 L9.6,9 M9.6,1 L1.4,9" stroke="#d5672c" stroke-width="2"/></svg>
<div class="abs" style="left:219px;top:110px;width:178.5px;height:85px;border:1px solid #5b82ad;border-radius:2px;background:linear-gradient(#deeefb 0,#deeefb 23px,#d5e9f9 23px,#d5e9f9 43px,#deeefb 43px,#deeefb 63px,#d5e9f9 63px,#d5e9f9 85px)"></div>
<span class="t" style="left:224.7px;top:117.7px;font-size:12px;color:#4a4a4a;transform:scaleX(0.888);">Face of Sketch 2</span>
<svg class="abs" style="left:380.5px;top:120.3px" width="7" height="7" viewBox="0 0 7 7"><path d="M0.8,0.8 L6.2,6.2 M6.2,0.8 L0.8,6.2" stroke="#c3d2e0" stroke-width="1"/></svg>
<span class="t" style="left:224.7px;top:137.6px;font-size:12px;color:#4a4a4a;transform:scaleX(0.888);">Face of Sketch 2</span>
<svg class="abs" style="left:380.5px;top:140.2px" width="7" height="7" viewBox="0 0 7 7"><path d="M0.8,0.8 L6.2,6.2 M6.2,0.8 L0.8,6.2" stroke="#c3d2e0" stroke-width="1"/></svg>
<span class="t" style="left:224.7px;top:157.8px;font-size:12px;color:#4a4a4a;transform:scaleX(0.888);">Face of Sketch 2</span>
<svg class="abs" style="left:380.5px;top:160.4px" width="7" height="7" viewBox="0 0 7 7"><path d="M0.8,0.8 L6.2,6.2 M6.2,0.8 L0.8,6.2" stroke="#c3d2e0" stroke-width="1"/></svg>
<span class="t" style="left:224.7px;top:177.8px;font-size:12px;color:#4a4a4a;transform:scaleX(0.888);">Face of Sketch 2</span>
<svg class="abs" style="left:380.5px;top:180.4px" width="7" height="7" viewBox="0 0 7 7"><path d="M0.8,0.8 L6.2,6.2 M6.2,0.8 L0.8,6.2" stroke="#c3d2e0" stroke-width="1"/></svg>
<div class="abs" style="left:390.3px;top:134.5px;width:5.5px;height:59.5px;background:#7e93ab;border-radius:2px"></div>
<div class="abs" style="left:218.8px;top:199.5px;width:178.2px;height:35.5px;border:1px solid #e7e7e7;border-radius:2px;background:#fff"></div>
<span class="t" style="left:224.0px;top:204.6px;font-size:8.8px;color:#8e8e8e;transform:scaleX(0.971);">Parts to lighten</span>
<span class="t" style="left:224.7px;top:219.0px;font-size:12px;color:#4a4a4a;transform:scaleX(0.928);">Block of Plastic</span>
<svg class="abs" style="left:380.5px;top:221.5px" width="8" height="8" viewBox="0 0 8 8"><path d="M0.8,0.8 L7.2,7.2 M7.2,0.8 L0.8,7.2" stroke="#d4d4d4" stroke-width="1"/></svg>
<div class="abs" style="left:220px;top:247.6px;width:10px;height:9.8px;background:#1b5faa;border-radius:2px"></div>
<svg class="abs" style="left:220px;top:247.6px" width="10" height="10" viewBox="0 0 10 10"><path d="M2.2,5 L4.2,7 L7.8,2.8" fill="none" stroke="#fff" stroke-width="1.5"/></svg>
<span class="t" style="left:233.5px;top:245.9px;font-size:12px;color:#7a7a7a;transform:scaleX(0.932);">Trim faces with part</span>
<span class="t" style="left:221.1px;top:268.9px;font-size:11.5px;color:#8c8c8c;transform:scaleX(0.864);">Thickness of walls</span>
<span class="t" style="left:347.9px;top:269.0px;font-size:12px;color:#666;transform:scaleX(0.917);">4 mm</span>
<div class="abs" style="left:306.5px;top:283.3px;width:71.5px;height:1px;background:#e2e2e2"></div>
<span class="t" style="left:221.1px;top:290.5px;font-size:11.5px;color:#8c8c8c;transform:scaleX(0.869);">Tool radius</span>
<span class="t" style="left:347.9px;top:290.6px;font-size:12px;color:#666;transform:scaleX(0.917);">2 mm</span>
<div class="abs" style="left:279.3px;top:305px;width:98.7px;height:1px;background:#e2e2e2"></div>
<span class="t" style="left:222.0px;top:309.5px;font-size:12.5px;color:#333;transform:scaleX(0.926);">Through all</span>
<div class="abs" style="left:366.8px;top:315.2px;border:3.1px solid transparent;border-top:3.6px solid #222;border-bottom:0"></div>
<div class="abs" style="left:216.3px;top:327px;width:161.7px;height:1px;background:#e2e2e2"></div>
<div class="abs" style="left:222px;top:338px;width:93.6px;height:1.2px;background:#555"></div>
<div class="abs" style="left:282px;top:333.9px;width:9.4px;height:9.4px;border-radius:50%;background:#fff;border:1.1px solid #555"></div>
<svg class="abs" style="left:0;top:0" width="1600" height="810" viewBox="0 0 1600 810">
<defs>
<linearGradient id="gtop" gradientUnits="userSpaceOnUse" x1="400" y1="300" x2="1100" y2="520"><stop offset="0" stop-color="#98b8d3"/><stop offset="0.6" stop-color="#9ebdd8"/><stop offset="1" stop-color="#9dbdd8"/></linearGradient>
<linearGradient id="gfront" gradientUnits="userSpaceOnUse" x1="346" y1="0" x2="844" y2="0"><stop offset="0" stop-color="#577289"/><stop offset="1" stop-color="#556f86"/></linearGradient>
<linearGradient id="gright" gradientUnits="userSpaceOnUse" x1="844" y1="0" x2="1131" y2="0"><stop offset="0" stop-color="#86a9c9"/><stop offset="1" stop-color="#7fa2c1"/></linearGradient>
<linearGradient id="ghole" gradientUnits="userSpaceOnUse" x1="705" y1="400" x2="775" y2="440"><stop offset="0" stop-color="#8eaac5"/><stop offset="1" stop-color="#6c86a0"/></linearGradient>
<clipPath id="cpAo"><path d="M642.4,230.2 L640.7,227.8 L637.9,225.8 L634.4,224.3 L630.3,223.6 L626.1,223.6 L622.1,224.4 L618.6,226.0 L616.0,228.0 L413.3,449.5 L411.5,452.8 L411.8,456.3 L414.3,459.5 L418.5,461.9 L423.9,463.0 L429.5,462.8 L512.8,448.7 L517.7,447.2 L521.4,444.6 L523.0,442.3 L523.4,439.7 L521.5,425.8 L521.6,412.4 L523.1,402.4 L525.8,392.4 L529.6,382.7 L534.6,373.0 L540.7,363.7 L550.3,351.8 L558.8,343.3 L568.4,335.1 L582.3,325.1 L593.9,318.0 L610.4,309.7 L623.8,304.0 L637.6,299.0 L658.8,292.7 L662.7,290.3 L664.5,287.9 L665.2,285.4 L664.7,282.8 L642.4,230.2Z"/></clipPath>
<clipPath id="cpAi"><path d="M679.5,317.7 L677.1,314.6 L674.2,312.8 L669.2,311.3 L665.1,311.0 L659.0,312.0 L642.3,317.5 L630.8,322.1 L623.0,325.7 L605.8,335.1 L593.0,343.9 L579.5,355.5 L570.2,365.6 L562.5,376.3 L556.6,387.4 L552.3,399.0 L550.3,407.4 L549.5,413.5 L549.6,427.9 L550.1,431.5 L551.1,434.1 L553.2,436.3 L556.2,438.1 L561.3,439.5 L565.4,439.7 L568.1,439.4 L663.4,423.3 L667.4,422.2 L671.5,419.7 L673.4,417.3 L675.2,411.1 L676.9,407.2 L682.1,399.9 L689.7,393.3 L702.7,385.6 L704.7,383.2 L705.5,380.5 L705.1,377.8 L679.5,317.7Z"/></clipPath>
<clipPath id="cpBo"><path d="M693.0,278.0 L694.6,280.4 L697.3,282.4 L700.7,283.9 L704.6,284.6 L707.3,284.7 L729.5,283.5 L750.6,283.6 L771.7,285.1 L792.6,287.8 L807.9,290.7 L822.8,294.3 L837.3,298.5 L851.2,303.5 L864.7,309.1 L877.3,315.3 L889.2,322.0 L903.6,331.7 L913.6,339.7 L925.2,350.9 L932.8,359.7 L940.5,370.2 L944.3,372.6 L948.0,373.8 L952.0,374.2 L956.1,373.9 L1039.5,359.9 L1042.1,359.2 L1045.6,357.7 L1047.4,356.4 L1049.3,354.0 L1050.1,351.4 L1049.2,347.9 L1047.1,345.6 L1042.9,343.3 L691.8,215.3 L687.8,214.3 L683.6,214.1 L678.2,215.0 L673.8,217.1 L671.0,220.2 L670.2,223.7 L693.0,278.0Z"/></clipPath>
<clipPath id="cpBi"><path d="M720.3,301.6 L715.0,302.6 L710.7,304.8 L708.5,307.0 L707.7,308.6 L707.5,312.1 L733.4,373.1 L735.1,375.6 L739.1,378.2 L742.9,379.4 L752.8,380.5 L758.9,381.6 L770.4,384.9 L781.0,389.7 L793.2,397.8 L797.0,399.1 L801.2,399.6 L805.5,399.3 L900.8,383.3 L905.7,381.7 L909.4,379.2 L911.0,376.8 L911.4,375.0 L911.3,373.3 L910.2,370.8 L901.2,359.9 L890.9,350.0 L879.4,341.0 L869.6,334.6 L855.9,327.0 L840.8,320.2 L828.5,315.6 L812.2,310.6 L798.8,307.3 L781.3,304.2 L767.3,302.5 L749.2,301.2 L735.0,301.1 L720.3,301.6Z"/></clipPath>
</defs>
<path d="M345.5,486.5 L843.5,668.0 L843.5,751.8 L345.5,570.3Z" fill="url(#gfront)" stroke="#3d5266" stroke-width="1"/>
<path d="M843.5,668.0 L1131.0,354.0 L1131.0,437.8 L843.5,751.8Z" fill="url(#gright)" stroke="#3d5266" stroke-width="1"/>
<path d="M633.0,172.5 L1131.0,354.0 L843.5,668.0 L345.5,486.5Z" fill="url(#gtop)" stroke="#3d5266" stroke-width="0.8"/>
<g clip-path="url(#cpAo)">
<path d="M642.4,230.2 L664.7,282.8 L665.2,285.4 L664.5,287.9 L662.7,290.3 L658.8,292.7 L637.6,299.0 L623.8,304.0 L610.4,309.7 L593.9,318.0 L582.3,325.1 L568.4,335.1 L558.8,343.3 L550.3,351.8 L540.7,363.7 L534.6,373.0 L529.6,382.7 L525.8,392.4 L523.1,402.4 L521.6,412.4 L521.5,425.8 L523.4,439.7 L523.0,442.3 L521.4,444.6 L517.7,447.2 L512.8,448.7 L429.5,462.8 L423.9,463.0 L418.5,461.9 L414.3,459.5 L411.8,456.3 L411.5,452.8 L413.3,449.5 L616.0,228.0 L618.6,226.0 L622.1,224.4 L626.1,223.6 L630.3,223.6 L634.4,224.3 L637.9,225.8 L640.7,227.8 L642.4,230.2Z" fill="#859fbb"/>
<path d="M642.4,230.2 L664.7,282.8 L664.7,366.6 L642.4,314.0Z" fill="#6e89a7" stroke="#6e89a7" stroke-width="0.6"/>
<path d="M664.7,282.8 L665.2,285.4 L665.2,369.2 L664.7,366.6Z" fill="#6e89a6" stroke="#6e89a6" stroke-width="0.6"/>
<path d="M521.6,412.4 L521.5,425.8 L523.4,439.7 L523.0,442.3 L523.0,526.1 L523.4,523.5 L521.5,509.6 L521.6,496.2Z" fill="#6e88a6" stroke="#6e88a6" stroke-width="0.6"/>
<path d="M411.5,452.8 L413.3,449.5 L413.3,533.3 L411.5,536.6Z" fill="#91b1cd" stroke="#91b1cd" stroke-width="0.6"/>
<path d="M413.3,449.5 L616.0,228.0 L616.0,311.8 L413.3,533.3Z" fill="#90afcb" stroke="#90afcb" stroke-width="0.6"/>
<path d="M616.0,228.0 L618.6,226.0 L618.6,309.8 L616.0,311.8Z" fill="#8fadc9" stroke="#8fadc9" stroke-width="0.6"/>
<path d="M618.6,226.0 L622.1,224.4 L622.1,308.2 L618.6,309.8Z" fill="#8ba9c5" stroke="#8ba9c5" stroke-width="0.6"/>
<path d="M622.1,224.4 L626.1,223.6 L626.1,307.4 L622.1,308.2Z" fill="#86a4c0" stroke="#86a4c0" stroke-width="0.6"/>
<path d="M626.1,223.6 L630.3,223.6 L630.3,307.4 L626.1,307.4Z" fill="#819eba" stroke="#819eba" stroke-width="0.6"/>
<path d="M630.3,223.6 L634.4,224.3 L634.4,308.1 L630.3,307.4Z" fill="#7b98b4" stroke="#7b98b4" stroke-width="0.6"/>
<path d="M634.4,224.3 L637.9,225.8 L637.9,309.6 L634.4,308.1Z" fill="#7692af" stroke="#7692af" stroke-width="0.6"/>
<path d="M637.9,225.8 L640.7,227.8 L640.7,311.6 L637.9,309.6Z" fill="#728eab" stroke="#728eab" stroke-width="0.6"/>
<path d="M640.7,227.8 L642.4,230.2 L642.4,314.0 L640.7,311.6Z" fill="#6f8aa8" stroke="#6f8aa8" stroke-width="0.6"/>
<path d="M616.0,228.0 L616.0,311.8" stroke="#4d6680" stroke-width="0.7" fill="none"/>
<path d="M642.4,230.2 L642.4,314.0" stroke="#4d6680" stroke-width="0.7" fill="none"/>
<path d="M664.6,282.5 L664.6,366.3" stroke="#4d6680" stroke-width="0.7" fill="none"/>
<path d="M522.7,438.2 L522.7,522.0" stroke="#4d6680" stroke-width="0.7" fill="none"/>
<path d="M413.3,449.5 L413.3,533.3" stroke="#4d6680" stroke-width="0.7" fill="none"/>
<path d="M642.4,314.0 L664.7,366.6 L665.2,369.2 L664.5,371.7 L662.7,374.1 L658.8,376.5 L637.6,382.8 L623.8,387.8 L610.4,393.5 L593.9,401.8 L582.3,408.9 L568.4,418.9 L558.8,427.1 L550.3,435.6 L540.7,447.5 L534.6,456.8 L529.6,466.5 L525.8,476.2 L523.1,486.2 L521.6,496.2 L521.5,509.6 L523.4,523.5 L523.0,526.1 L521.4,528.4 L517.7,531.0 L512.8,532.5 L429.5,546.6 L423.9,546.8 L418.5,545.7 L414.3,543.3 L411.8,540.1 L411.5,536.6 L413.3,533.3 L616.0,311.8 L618.6,309.8 L622.1,308.2 L626.1,307.4 L630.3,307.4 L634.4,308.1 L637.9,309.6 L640.7,311.6 L642.4,314.0Z" fill="#d6e4f0" stroke="#4a6078" stroke-width="1"/>
</g>
<path d="M642.4,230.2 L664.7,282.8 L665.2,285.4 L664.5,287.9 L662.7,290.3 L658.8,292.7 L637.6,299.0 L623.8,304.0 L610.4,309.7 L593.9,318.0 L582.3,325.1 L568.4,335.1 L558.8,343.3 L550.3,351.8 L540.7,363.7 L534.6,373.0 L529.6,382.7 L525.8,392.4 L523.1,402.4 L521.6,412.4 L521.5,425.8 L523.4,439.7 L523.0,442.3 L521.4,444.6 L517.7,447.2 L512.8,448.7 L429.5,462.8 L423.9,463.0 L418.5,461.9 L414.3,459.5 L411.8,456.3 L411.5,452.8 L413.3,449.5 L616.0,228.0 L618.6,226.0 L622.1,224.4 L626.1,223.6 L630.3,223.6 L634.4,224.3 L637.9,225.8 L640.7,227.8 L642.4,230.2Z" fill="none" stroke="#46607a" stroke-width="1"/>
<g clip-path="url(#cpAi)">
<path d="M679.5,317.7 L705.1,377.8 L705.5,380.5 L704.7,383.2 L702.7,385.6 L689.7,393.3 L682.1,399.9 L676.9,407.2 L675.2,411.1 L673.4,417.3 L671.5,419.7 L667.4,422.2 L663.4,423.3 L568.1,439.4 L565.4,439.7 L561.3,439.5 L556.2,438.1 L553.2,436.3 L551.1,434.1 L550.1,431.5 L549.6,427.9 L549.5,413.5 L550.3,407.4 L552.3,399.0 L556.6,387.4 L562.5,376.3 L570.2,365.6 L579.5,355.5 L593.0,343.9 L605.8,335.1 L623.0,325.7 L630.8,322.1 L642.3,317.5 L659.0,312.0 L665.1,311.0 L669.2,311.3 L674.2,312.8 L677.1,314.6 L679.5,317.7Z" fill="#859fbb"/>
<path d="M679.5,317.7 L705.1,377.8 L705.1,461.6 L679.5,401.5Z" fill="#6e89a7" stroke="#6e89a7" stroke-width="0.6"/>
<path d="M705.1,377.8 L705.5,380.5 L705.5,464.3 L705.1,461.6Z" fill="#6e89a6" stroke="#6e89a6" stroke-width="0.6"/>
<path d="M549.5,413.5 L550.3,407.4 L552.3,399.0 L552.3,482.8 L550.3,491.2 L549.5,497.3Z" fill="#92b1ce" stroke="#92b1ce" stroke-width="0.6"/>
<path d="M552.3,399.0 L556.6,387.4 L562.5,376.3 L562.5,460.1 L556.6,471.2 L552.3,482.8Z" fill="#92b1cd" stroke="#92b1cd" stroke-width="0.6"/>
<path d="M562.5,376.3 L570.2,365.6 L579.5,355.5 L579.5,439.3 L570.2,449.4 L562.5,460.1Z" fill="#90afcb" stroke="#90afcb" stroke-width="0.6"/>
<path d="M579.5,355.5 L593.0,343.9 L605.8,335.1 L605.8,418.9 L593.0,427.7 L579.5,439.3Z" fill="#8eadc9" stroke="#8eadc9" stroke-width="0.6"/>
<path d="M605.8,335.1 L623.0,325.7 L630.8,322.1 L630.8,405.9 L623.0,409.5 L605.8,418.9Z" fill="#8caac6" stroke="#8caac6" stroke-width="0.6"/>
<path d="M630.8,322.1 L642.3,317.5 L659.0,312.0 L659.0,395.8 L642.3,401.3 L630.8,405.9Z" fill="#89a7c4" stroke="#89a7c4" stroke-width="0.6"/>
<path d="M659.0,312.0 L665.1,311.0 L665.1,394.8 L659.0,395.8Z" fill="#85a3bf" stroke="#85a3bf" stroke-width="0.6"/>
<path d="M665.1,311.0 L669.2,311.3 L669.2,395.1 L665.1,394.8Z" fill="#7e9bb8" stroke="#7e9bb8" stroke-width="0.6"/>
<path d="M669.2,311.3 L674.2,312.8 L674.2,396.6 L669.2,395.1Z" fill="#7894b1" stroke="#7894b1" stroke-width="0.6"/>
<path d="M674.2,312.8 L677.1,314.6 L677.1,398.4 L674.2,396.6Z" fill="#738fac" stroke="#738fac" stroke-width="0.6"/>
<path d="M677.1,314.6 L679.5,317.7 L679.5,401.5 L677.1,398.4Z" fill="#708ba8" stroke="#708ba8" stroke-width="0.6"/>
<path d="M660.6,311.2 L660.6,395.0" stroke="#4d6680" stroke-width="0.7" fill="none"/>
<path d="M679.4,317.4 L679.4,401.2" stroke="#4d6680" stroke-width="0.7" fill="none"/>
<path d="M704.8,377.2 L704.8,461.0" stroke="#4d6680" stroke-width="0.7" fill="none"/>
<path d="M673.1,414.3 L673.1,498.1" stroke="#4d6680" stroke-width="0.7" fill="none"/>
<path d="M679.5,401.5 L705.1,461.6 L705.5,464.3 L704.7,467.0 L702.7,469.4 L689.7,477.1 L682.1,483.7 L676.9,491.0 L675.2,494.9 L673.4,501.1 L671.5,503.5 L667.4,506.0 L663.4,507.1 L568.1,523.2 L565.4,523.5 L561.3,523.3 L556.2,521.9 L553.2,520.1 L551.1,517.9 L550.1,515.3 L549.6,511.7 L549.5,497.3 L550.3,491.2 L552.3,482.8 L556.6,471.2 L562.5,460.1 L570.2,449.4 L579.5,439.3 L593.0,427.7 L605.8,418.9 L623.0,409.5 L630.8,405.9 L642.3,401.3 L659.0,395.8 L665.1,394.8 L669.2,395.1 L674.2,396.6 L677.1,398.4 L679.5,401.5Z" fill="#d6e4f0" stroke="#4a6078" stroke-width="1"/>
</g>
<path d="M679.5,317.7 L705.1,377.8 L705.5,380.5 L704.7,383.2 L702.7,385.6 L689.7,393.3 L682.1,399.9 L676.9,407.2 L675.2,411.1 L673.4,417.3 L671.5,419.7 L667.4,422.2 L663.4,423.3 L568.1,439.4 L565.4,439.7 L561.3,439.5 L556.2,438.1 L553.2,436.3 L551.1,434.1 L550.1,431.5 L549.6,427.9 L549.5,413.5 L550.3,407.4 L552.3,399.0 L556.6,387.4 L562.5,376.3 L570.2,365.6 L579.5,355.5 L593.0,343.9 L605.8,335.1 L623.0,325.7 L630.8,322.1 L642.3,317.5 L659.0,312.0 L665.1,311.0 L669.2,311.3 L674.2,312.8 L677.1,314.6 L679.5,317.7Z" fill="none" stroke="#46607a" stroke-width="1"/>
<g clip-path="url(#cpBo)">
<path d="M693.0,278.0 L670.2,223.7 L671.0,220.2 L673.8,217.1 L678.2,215.0 L683.6,214.1 L687.8,214.3 L691.8,215.3 L1042.9,343.3 L1047.1,345.6 L1049.2,347.9 L1050.1,351.4 L1049.3,354.0 L1047.4,356.4 L1045.6,357.7 L1042.1,359.2 L1039.5,359.9 L956.1,373.9 L952.0,374.2 L948.0,373.8 L944.3,372.6 L940.5,370.2 L932.8,359.7 L925.2,350.9 L913.6,339.7 L903.6,331.7 L889.2,322.0 L877.3,315.3 L864.7,309.1 L851.2,303.5 L837.3,298.5 L822.8,294.3 L807.9,290.7 L792.6,287.8 L771.7,285.1 L750.6,283.6 L729.5,283.5 L707.3,284.7 L704.6,284.6 L700.7,283.9 L697.3,282.4 L694.6,280.4 L693.0,278.0Z" fill="#859fbb"/>
<path d="M670.2,223.7 L671.0,220.2 L671.0,304.0 L670.2,307.5Z" fill="#92b1ce" stroke="#92b1ce" stroke-width="0.6"/>
<path d="M671.0,220.2 L673.8,217.1 L673.8,300.9 L671.0,304.0Z" fill="#90afcb" stroke="#90afcb" stroke-width="0.6"/>
<path d="M673.8,217.1 L678.2,215.0 L678.2,298.8 L673.8,300.9Z" fill="#8baac6" stroke="#8baac6" stroke-width="0.6"/>
<path d="M678.2,215.0 L683.6,214.1 L683.6,297.9 L678.2,298.8Z" fill="#85a3bf" stroke="#85a3bf" stroke-width="0.6"/>
<path d="M683.6,214.1 L687.8,214.3 L687.8,298.1 L683.6,297.9Z" fill="#7f9cb8" stroke="#7f9cb8" stroke-width="0.6"/>
<path d="M687.8,214.3 L691.8,215.3 L691.8,299.1 L687.8,298.1Z" fill="#7996b3" stroke="#7996b3" stroke-width="0.6"/>
<path d="M691.8,215.3 L1042.9,343.3 L1042.9,427.1 L691.8,299.1Z" fill="#7793b0" stroke="#7793b0" stroke-width="0.6"/>
<path d="M1042.9,343.3 L1047.1,345.6 L1047.1,429.4 L1042.9,427.1Z" fill="#7490ad" stroke="#7490ad" stroke-width="0.6"/>
<path d="M1047.1,345.6 L1049.2,347.9 L1049.2,431.7 L1047.1,429.4Z" fill="#708ba9" stroke="#708ba9" stroke-width="0.6"/>
<path d="M1049.2,347.9 L1050.1,351.4 L1050.1,435.2 L1049.2,431.7Z" fill="#6e89a7" stroke="#6e89a7" stroke-width="0.6"/>
<path d="M1042.9,343.3 L1042.9,427.1" stroke="#4d6680" stroke-width="0.7" fill="none"/>
<path d="M691.8,215.3 L691.8,299.1" stroke="#4d6680" stroke-width="0.7" fill="none"/>
<path d="M693.0,361.8 L670.2,307.5 L671.0,304.0 L673.8,300.9 L678.2,298.8 L683.6,297.9 L687.8,298.1 L691.8,299.1 L1042.9,427.1 L1047.1,429.4 L1049.2,431.7 L1050.1,435.2 L1049.3,437.8 L1047.4,440.2 L1045.6,441.5 L1042.1,443.0 L1039.5,443.7 L956.1,457.7 L952.0,458.0 L948.0,457.6 L944.3,456.4 L940.5,454.0 L932.8,443.5 L925.2,434.7 L913.6,423.5 L903.6,415.5 L889.2,405.8 L877.3,399.1 L864.7,392.9 L851.2,387.3 L837.3,382.3 L822.8,378.1 L807.9,374.5 L792.6,371.6 L771.7,368.9 L750.6,367.4 L729.5,367.3 L707.3,368.5 L704.6,368.4 L700.7,367.7 L697.3,366.2 L694.6,364.2 L693.0,361.8Z" fill="#d6e4f0" stroke="#4a6078" stroke-width="1"/>
</g>
<path d="M693.0,278.0 L670.2,223.7 L671.0,220.2 L673.8,217.1 L678.2,215.0 L683.6,214.1 L687.8,214.3 L691.8,215.3 L1042.9,343.3 L1047.1,345.6 L1049.2,347.9 L1050.1,351.4 L1049.3,354.0 L1047.4,356.4 L1045.6,357.7 L1042.1,359.2 L1039.5,359.9 L956.1,373.9 L952.0,374.2 L948.0,373.8 L944.3,372.6 L940.5,370.2 L932.8,359.7 L925.2,350.9 L913.6,339.7 L903.6,331.7 L889.2,322.0 L877.3,315.3 L864.7,309.1 L851.2,303.5 L837.3,298.5 L822.8,294.3 L807.9,290.7 L792.6,287.8 L771.7,285.1 L750.6,283.6 L729.5,283.5 L707.3,284.7 L704.6,284.6 L700.7,283.9 L697.3,282.4 L694.6,280.4 L693.0,278.0Z" fill="none" stroke="#46607a" stroke-width="1"/>
<g clip-path="url(#cpBi)">
<path d="M720.3,301.6 L735.0,301.1 L749.2,301.2 L767.3,302.5 L781.3,304.2 L798.8,307.3 L812.2,310.6 L828.5,315.6 L840.8,320.2 L855.9,327.0 L869.6,334.6 L879.4,341.0 L890.9,350.0 L901.2,359.9 L910.2,370.8 L911.3,373.3 L911.4,375.0 L911.0,376.8 L909.4,379.2 L905.7,381.7 L900.8,383.3 L805.5,399.3 L801.2,399.6 L797.0,399.1 L793.2,397.8 L781.0,389.7 L770.4,384.9 L758.9,381.6 L752.8,380.5 L742.9,379.4 L739.1,378.2 L735.1,375.6 L733.4,373.1 L707.5,312.1 L707.7,308.6 L708.5,307.0 L710.7,304.8 L715.0,302.6 L720.3,301.6Z" fill="#859fbb"/>
<path d="M720.3,301.6 L735.0,301.1 L749.2,301.2 L749.2,385.0 L735.0,384.9 L720.3,385.4Z" fill="#819eba" stroke="#819eba" stroke-width="0.6"/>
<path d="M749.2,301.2 L767.3,302.5 L781.3,304.2 L781.3,388.0 L767.3,386.3 L749.2,385.0Z" fill="#7e9ab7" stroke="#7e9ab7" stroke-width="0.6"/>
<path d="M781.3,304.2 L798.8,307.3 L812.2,310.6 L812.2,394.4 L798.8,391.1 L781.3,388.0Z" fill="#7a97b4" stroke="#7a97b4" stroke-width="0.6"/>
<path d="M812.2,310.6 L828.5,315.6 L840.8,320.2 L840.8,404.0 L828.5,399.4 L812.2,394.4Z" fill="#7894b1" stroke="#7894b1" stroke-width="0.6"/>
<path d="M840.8,320.2 L855.9,327.0 L869.6,334.6 L869.6,418.4 L855.9,410.8 L840.8,404.0Z" fill="#7590ae" stroke="#7590ae" stroke-width="0.6"/>
<path d="M869.6,334.6 L879.4,341.0 L890.9,350.0 L890.9,433.8 L879.4,424.8 L869.6,418.4Z" fill="#728eab" stroke="#728eab" stroke-width="0.6"/>
<path d="M890.9,350.0 L901.2,359.9 L910.2,370.8 L910.2,454.6 L901.2,443.7 L890.9,433.8Z" fill="#708ba9" stroke="#708ba9" stroke-width="0.6"/>
<path d="M910.2,370.8 L911.3,373.3 L911.3,457.1 L910.2,454.6Z" fill="#6e89a7" stroke="#6e89a7" stroke-width="0.6"/>
<path d="M911.3,373.3 L911.4,375.0 L911.4,458.8 L911.3,457.1Z" fill="#6e88a6" stroke="#6e88a6" stroke-width="0.6"/>
<path d="M707.5,312.1 L707.7,308.6 L707.7,392.4 L707.5,395.9Z" fill="#92b2ce" stroke="#92b2ce" stroke-width="0.6"/>
<path d="M707.7,308.6 L708.5,307.0 L708.5,390.8 L707.7,392.4Z" fill="#92b1cd" stroke="#92b1cd" stroke-width="0.6"/>
<path d="M708.5,307.0 L710.7,304.8 L710.7,388.6 L708.5,390.8Z" fill="#90afcb" stroke="#90afcb" stroke-width="0.6"/>
<path d="M710.7,304.8 L715.0,302.6 L715.0,386.4 L710.7,388.6Z" fill="#8caac6" stroke="#8caac6" stroke-width="0.6"/>
<path d="M715.0,302.6 L720.3,301.6 L720.3,385.4 L715.0,386.4Z" fill="#86a3c0" stroke="#86a3c0" stroke-width="0.6"/>
<path d="M911.1,371.3 L911.1,455.1" stroke="#4d6680" stroke-width="0.7" fill="none"/>
<path d="M719.1,301.3 L719.1,385.1" stroke="#4d6680" stroke-width="0.7" fill="none"/>
<path d="M720.3,385.4 L735.0,384.9 L749.2,385.0 L767.3,386.3 L781.3,388.0 L798.8,391.1 L812.2,394.4 L828.5,399.4 L840.8,404.0 L855.9,410.8 L869.6,418.4 L879.4,424.8 L890.9,433.8 L901.2,443.7 L910.2,454.6 L911.3,457.1 L911.4,458.8 L911.0,460.6 L909.4,463.0 L905.7,465.5 L900.8,467.1 L805.5,483.1 L801.2,483.4 L797.0,482.9 L793.2,481.6 L781.0,473.5 L770.4,468.7 L758.9,465.4 L752.8,464.3 L742.9,463.2 L739.1,462.0 L735.1,459.4 L733.4,456.9 L707.5,395.9 L707.7,392.4 L708.5,390.8 L710.7,388.6 L715.0,386.4 L720.3,385.4Z" fill="#d6e4f0" stroke="#4a6078" stroke-width="1"/>
</g>
<path d="M720.3,301.6 L735.0,301.1 L749.2,301.2 L767.3,302.5 L781.3,304.2 L798.8,307.3 L812.2,310.6 L828.5,315.6 L840.8,320.2 L855.9,327.0 L869.6,334.6 L879.4,341.0 L890.9,350.0 L901.2,359.9 L910.2,370.8 L911.3,373.3 L911.4,375.0 L911.0,376.8 L909.4,379.2 L905.7,381.7 L900.8,383.3 L805.5,399.3 L801.2,399.6 L797.0,399.1 L793.2,397.8 L781.0,389.7 L770.4,384.9 L758.9,381.6 L752.8,380.5 L742.9,379.4 L739.1,378.2 L735.1,375.6 L733.4,373.1 L707.5,312.1 L707.7,308.6 L708.5,307.0 L710.7,304.8 L715.0,302.6 L720.3,301.6Z" fill="none" stroke="#46607a" stroke-width="1"/>
<path d="M768.9,431.4 L769.7,430.5 L770.5,429.5 L771.1,428.5 L771.7,427.4 L772.3,426.4 L772.7,425.3 L773.0,424.3 L773.3,423.2 L773.5,422.1 L773.6,421.0 L773.6,419.9 L773.5,418.8 L773.4,417.7 L773.1,416.6 L772.8,415.6 L772.4,414.5 L771.9,413.4 L771.3,412.4 L770.7,411.4 L770.0,410.4 L769.2,409.4 L768.3,408.5 L767.3,407.6 L766.3,406.7 L765.2,405.8 L764.1,405.0 L762.8,404.2 L761.6,403.5 L760.2,402.8 L758.8,402.1 L757.4,401.5 L755.9,400.9 L754.4,400.4 L752.8,399.9 L751.2,399.5 L749.6,399.1 L748.0,398.8 L746.3,398.5 L744.6,398.3 L742.9,398.1 L741.1,398.0 L739.4,398.0 L737.7,397.9 L735.9,398.0 L734.2,398.1 L732.5,398.2 L730.8,398.4 L729.1,398.7 L727.4,399.0 L725.8,399.4 L724.2,399.8 L722.6,400.2 L721.1,400.7 L719.6,401.3 L718.1,401.9 L716.7,402.5 L715.4,403.2 L714.1,404.0 L712.8,404.7 L711.7,405.5 L710.5,406.4 L709.5,407.2 L708.5,408.2 L707.6,409.1 L706.8,410.0 L706.0,411.0 L705.4,412.0 L704.8,413.1 L704.2,414.1 L703.8,415.2 L703.5,416.2 L703.2,417.3 L703.0,418.4 L702.9,419.5 L702.9,420.6 L703.0,421.7 L703.1,422.8 L703.4,423.9 L703.7,424.9 L704.1,426.0 L704.6,427.1 L705.2,428.1 L705.8,429.1 L706.5,430.1 L707.3,431.1 L708.2,432.0 L709.2,432.9 L710.2,433.8 L711.3,434.7 L712.4,435.5 L713.7,436.3 L714.9,437.0 L716.3,437.7 L717.7,438.4 L719.1,439.0 L720.6,439.6 L722.1,440.1 L723.7,440.6 L725.3,441.0 L726.9,441.4 L728.5,441.7 L730.2,442.0 L731.9,442.2 L733.6,442.4 L735.4,442.5 L737.1,442.5 L738.8,442.6 L740.6,442.5 L742.3,442.4 L744.0,442.3 L745.7,442.1 L747.4,441.8 L749.1,441.5 L750.7,441.1 L752.3,440.7 L753.9,440.3 L755.4,439.8 L756.9,439.2 L758.4,438.6 L759.8,438.0 L761.1,437.3 L762.4,436.5 L763.7,435.8 L764.8,435.0 L766.0,434.1 L767.0,433.3 L768.0,432.3 L768.9,431.4Z" fill="url(#ghole)"/>
<path d="M790.8,543.9 L785.6,544.8 L780.3,545.5 L775.0,546.2 L769.7,546.7 L764.3,547.2 L758.9,547.6 L753.6,547.9 L748.2,548.1 L742.8,548.2 L737.4,548.3 L732.0,548.2 L726.6,548.1 L721.2,547.8 L715.8,547.5 L710.4,547.1 L705.1,546.5 L699.8,545.9 L694.5,545.2 L689.2,544.5 L684.0,543.6 L678.8,542.6 L673.6,541.6 L668.5,540.5 L663.5,539.3 L658.5,538.0 L653.6,536.6 L648.7,535.1 L643.9,533.6 L639.1,531.9 L634.4,530.2 L629.8,528.4 L625.3,526.6 L620.8,524.6 L616.5,522.6 L612.2,520.6 L608.0,518.4 L603.9,516.2 L599.9,513.9 L596.0,511.5 L592.2,509.1 L588.5,506.6 L584.9,504.1 L581.4,501.5 L578.0,498.8 L574.8,496.1 L571.6,493.3 L568.6,490.5 L565.7,487.6 L562.9,484.7 L560.3,481.7 L557.7,478.7 L555.3,475.7 L553.0,472.6 L550.9,469.4 L548.9,466.3 L547.0,463.1 L545.3,459.9 L543.7,456.6 L542.2,453.3" fill="none" stroke="#54748f" stroke-width="1.1"/>
<path d="M542.2,453.3 L540.7,449.6 L539.4,445.9 L538.3,442.2 L537.3,438.5 L536.6,434.7 L536.0,430.9 L535.6,427.1 L535.3,423.3 L535.3,419.6 L535.4,415.8 L535.7,412.0 L536.2,408.2 L536.8,404.4 L537.6,400.7 L538.6,396.9 L539.8,393.2 L541.2,389.5 L542.7,385.8 L544.4,382.2 L546.3,378.6 L548.3,375.0 L550.5,371.5 L552.9,368.0 L555.4,364.6 L558.1,361.2 L561.0,357.8 L564.0,354.5 L567.1,351.3 L570.5,348.2 L573.9,345.0 L577.5,342.0 L581.3,339.0 L585.1,336.1 L589.2,333.3 L593.3,330.6 L597.6,327.9 L602.0,325.3 L606.5,322.8 L611.1,320.4 L615.9,318.1 L620.7,315.8 L625.7,313.7 L630.7,311.6 L635.9,309.7 L641.1,307.8 L646.4,306.0 L651.9,304.4 L657.3,302.8 L662.9,301.3 L668.5,300.0 L674.2,298.7 L679.9,297.6 L685.7,296.6 L691.5,295.6 L697.4,294.8 L703.3,294.1 L709.3,293.5 L715.2,293.0 L721.2,292.7 L727.2,292.4 L733.2,292.3 L739.2,292.2 L745.3,292.3 L751.3,292.5 L757.3,292.8 L763.2,293.2 L769.2,293.7 L775.1,294.4 L781.0,295.1 L786.9,296.0 L792.7,296.9 L798.5,298.0 L804.2,299.2 L809.9,300.5 L815.5,301.9 L821.0,303.4 L826.4,305.0 L831.8,306.7 L837.1,308.5 L842.3,310.4 L847.4,312.4 L852.5,314.5 L857.4,316.6 L862.2,318.9 L866.9,321.3 L871.5,323.7 L876.0,326.3 L880.4,328.9 L884.6,331.6 L888.7,334.3 L892.7,337.2 L896.5,340.1 L900.2,343.1 L903.8,346.2 L907.2,349.3 L910.4,352.5 L913.5,355.7 L916.5,359.1 L919.3,362.4 L921.9,365.8 L924.4,369.3 L926.7,372.8 L928.9,376.3 L930.9,379.9 L932.7,383.5 L934.3,387.2 L935.8,390.9 L937.1,394.6 L938.2,398.3 L939.2,402.0 L939.9,405.8 L940.5,409.6 L940.9,413.4 L941.2,417.2 L941.2,420.9 L941.1,424.7 L940.8,428.5 L940.3,432.3 L939.7,436.1 L938.9,439.8 L937.9,443.6 L936.7,447.3 L935.3,451.0 L933.8,454.7 L932.1,458.3 L930.2,461.9 L928.2,465.5 L926.0,469.0 L923.6,472.5 L921.1,475.9 L918.4,479.3 L915.5,482.7 L912.5,486.0 L909.4,489.2 L906.0,492.3 L902.6,495.5 L899.0,498.5 L895.2,501.5 L891.4,504.4 L887.3,507.2 L883.2,509.9 L878.9,512.6 L874.5,515.2 L870.0,517.7 L865.4,520.1 L860.6,522.4 L855.8,524.7 L850.8,526.8 L845.8,528.9 L840.6,530.8 L835.4,532.7 L830.1,534.5 L824.6,536.1 L819.2,537.7 L813.6,539.2 L808.0,540.5 L802.3,541.8 L796.6,542.9 L790.8,543.9" fill="none" stroke="#e7b44c" stroke-width="3"/>
<path d="M633.0,172.5 L729.1,398.7" stroke="#e7b44c" stroke-width="2.8" fill="none" stroke-linecap="round" />
<path d="M345.5,486.5 L704.1,426.0" stroke="#e7b44c" stroke-width="2.8" fill="none" stroke-linecap="round" />
<path d="M1131.0,354.0 L772.4,414.5" stroke="#e7b44c" stroke-width="2.8" fill="none" stroke-linecap="round" />
<path d="M747.4,441.8 L790.8,543.9" stroke="#e7b44c" stroke-width="2.8" fill="none" stroke-linecap="round" />
<path d="M790.8,543.9 L843.5,668.0" stroke="#ead9b6" stroke-width="2.4" fill="none" stroke-linecap="round" />
<path d="M768.9,431.4 L769.7,430.5 L770.5,429.5 L771.1,428.5 L771.7,427.4 L772.3,426.4 L772.7,425.3 L773.0,424.3 L773.3,423.2 L773.5,422.1 L773.6,421.0 L773.6,419.9 L773.5,418.8 L773.4,417.7 L773.1,416.6 L772.8,415.6 L772.4,414.5 L771.9,413.4 L771.3,412.4 L770.7,411.4 L770.0,410.4 L769.2,409.4 L768.3,408.5 L767.3,407.6 L766.3,406.7 L765.2,405.8 L764.1,405.0 L762.8,404.2 L761.6,403.5 L760.2,402.8 L758.8,402.1 L757.4,401.5 L755.9,400.9 L754.4,400.4 L752.8,399.9 L751.2,399.5 L749.6,399.1 L748.0,398.8 L746.3,398.5 L744.6,398.3 L742.9,398.1 L741.1,398.0 L739.4,398.0 L737.7,397.9 L735.9,398.0 L734.2,398.1 L732.5,398.2 L730.8,398.4 L729.1,398.7 L727.4,399.0 L725.8,399.4 L724.2,399.8 L722.6,400.2 L721.1,400.7 L719.6,401.3 L718.1,401.9 L716.7,402.5 L715.4,403.2 L714.1,404.0 L712.8,404.7 L711.7,405.5 L710.5,406.4 L709.5,407.2 L708.5,408.2 L707.6,409.1 L706.8,410.0 L706.0,411.0 L705.4,412.0 L704.8,413.1 L704.2,414.1 L703.8,415.2 L703.5,416.2 L703.2,417.3 L703.0,418.4 L702.9,419.5 L702.9,420.6 L703.0,421.7 L703.1,422.8 L703.4,423.9 L703.7,424.9 L704.1,426.0 L704.6,427.1 L705.2,428.1 L705.8,429.1 L706.5,430.1 L707.3,431.1 L708.2,432.0 L709.2,432.9 L710.2,433.8 L711.3,434.7 L712.4,435.5 L713.7,436.3 L714.9,437.0 L716.3,437.7 L717.7,438.4 L719.1,439.0 L720.6,439.6 L722.1,440.1 L723.7,440.6 L725.3,441.0 L726.9,441.4 L728.5,441.7 L730.2,442.0 L731.9,442.2 L733.6,442.4 L735.4,442.5 L737.1,442.5 L738.8,442.6 L740.6,442.5 L742.3,442.4 L744.0,442.3 L745.7,442.1 L747.4,441.8 L749.1,441.5 L750.7,441.1 L752.3,440.7 L753.9,440.3 L755.4,439.8 L756.9,439.2 L758.4,438.6 L759.8,438.0 L761.1,437.3 L762.4,436.5 L763.7,435.8 L764.8,435.0 L766.0,434.1 L767.0,433.3 L768.0,432.3 L768.9,431.4Z" fill="none" stroke="#e7b44c" stroke-width="2.6"/>
<path d="M633.0,172.5 L1131.0,354.0" stroke="#e7b44c" stroke-width="2.6" fill="none" stroke-linecap="round" />
<path d="M633.0,172.5 L345.5,486.5" stroke="#e7b44c" stroke-width="2.6" fill="none" stroke-linecap="round" />
<path d="M1131.0,354.0 L843.5,668.0" stroke="#ead9b6" stroke-width="2.3" fill="none" stroke-linecap="round" />
<circle cx="738.7" cy="503.6" r="3.6" fill="none" stroke="#222" stroke-width="1.1"/><circle cx="738.7" cy="503.6" r="1.3" fill="#222"/>
<path d="M947.3,483.3 l0,12.6 l2.9,-2.7 l2.3,4.9 l2,-0.9 l-2.2,-4.8 l4,-0.2z" fill="#f4f8fb" stroke="#3a536b" stroke-width="1.1" stroke-linejoin="round"/>
<text x="960.2" y="499.3" font-family="Liberation Sans, sans-serif" font-size="8.5" fill="#4f6a84">5</text>
</svg>
<svg class="abs" style="left:0;top:0" width="1600" height="220" viewBox="0 0 1600 220"><path d="M1527.5,77.5 L1532.5,85 L1522.5,85Z" fill="#e3e7ec"/><path d="M1527.5,202 L1532.5,194.5 L1522.5,194.5Z" fill="#e3e7ec"/><path d="M1465.5,140 L1473,135 L1473,145Z" fill="#e3e7ec"/><path d="M1589.5,140 L1582,135 L1582,145Z" fill="#e3e7ec"/><path d="M1509,86 C1499,89 1490,95 1485,102" fill="none" stroke="#e3e7ec" stroke-width="3"/><path d="M1482,96 L1483.5,105.5 L1491,101Z" fill="#e3e7ec"/><path d="M1546,86 C1556,89 1565,95 1570,102" fill="none" stroke="#e3e7ec" stroke-width="3"/><path d="M1573,96 L1571.5,105.5 L1564,101Z" fill="#e3e7ec"/><path d="M1526.5,104.5 L1557,116 Q1559,117 1559,119.5 L1559,151 Q1559,153.5 1557,155 L1536.5,175.5 Q1534.5,177 1532,176 L1499,164 Q1497,163 1497,160.5 L1497,127.5 Q1497,125.5 1499,124 L1523.5,105 Q1525,104 1526.5,104.5Z" fill="#e6ebf1" stroke="#e1e6ec" stroke-width="1"/><path d="M1526.5,108 L1551,117.5 L1531.5,135 L1504.5,125.5Z" fill="#fbfcfd" stroke="#f3f5f8" stroke-width="2" stroke-linejoin="round"/><path d="M1500.5,130 L1528.5,140.5 L1528.5,171 L1500.5,160Z" fill="#fbfcfd" stroke="#f3f5f8" stroke-width="2" stroke-linejoin="round"/><path d="M1535,140 L1555.5,121 L1555.5,151 L1535,171Z" fill="#fbfcfd" stroke="#f3f5f8" stroke-width="2" stroke-linejoin="round"/><circle cx="1531.5" cy="139" r="3.6" fill="#fbfcfd"/><circle cx="1499.5" cy="127" r="3.6" fill="#fbfcfd"/><circle cx="1557" cy="118.5" r="3.6" fill="#fbfcfd"/><circle cx="1526.5" cy="106.5" r="3.6" fill="#fbfcfd"/><path d="M1492.5,128.5 L1492.5,165" stroke="#6a9acb" stroke-width="1.5"/><path d="M1492.5,165 L1536.5,181" stroke="#dfae98" stroke-width="1.3"/><path d="M1492.5,165 L1521,134" stroke="#c9d3c9" stroke-width="1"/><text x="1489.6" y="125.3" font-family="Liberation Sans, sans-serif" font-size="11" fill="#3a78b5">Z</text><text x="1539.6" y="188.2" font-family="Liberation Sans, sans-serif" font-size="10.5" fill="#d9634a">X</text><text x="1518.6" y="139" font-family="Liberation Sans, sans-serif" font-size="7" fill="#9aa59a">Y</text><text transform="translate(1520.5,119.5) rotate(19) skewX(-18)" font-family="Liberation Sans, sans-serif" font-size="8.5" font-style="italic" fill="#5a5a5a">Top</text><text transform="translate(1504,152.5) rotate(20)" font-family="Liberation Sans, sans-serif" font-size="9.5" fill="#555">Front</text><text transform="translate(1548.5,156) rotate(-58) skewX(8)" font-family="Liberation Sans, sans-serif" font-size="6.8" fill="#6a6a6a">Right</text><path d="M1559,190.5 L1567,188 L1573,190 L1573,199 L1566,202 L1559,199.5Z" fill="#cfcfcf" stroke="#8a8a8a" stroke-width="0.8"/><path d="M1559,190.5 L1566,192.6 L1573,190 M1566,192.6 L1566,202" fill="none" stroke="#777" stroke-width="0.8"/><path d="M1559.5,191 L1566,193 L1566,201.5 L1559.5,199.2Z" fill="#a6a6a6"/><path d="M1560,190.4 L1567,188.5 L1572.4,190.2 L1566,192.2Z" fill="#f6f6f6"/><path d="M1580,193.2 L1586,193.2 L1583,196.8Z" fill="#222"/></svg>
<div class="abs" style="left:1576.5px;top:363.5px;width:24px;height:111px;background:#fff;border:1px solid #dcdcdc;border-right:0"></div>
<div class="abs" style="left:1577px;top:391px;width:23px;height:1px;background:#e2e2e2"></div>
<div class="abs" style="left:1577px;top:418.5px;width:23px;height:1px;background:#e2e2e2"></div>
<div class="abs" style="left:1577px;top:446px;width:23px;height:1px;background:#e2e2e2"></div>
<svg class="abs" style="left:1580px;top:367px" width="20" height="106" viewBox="0 0 20 106"><circle cx="10.5" cy="6.6" r="4.2" fill="#a0a0a0" stroke="#777" stroke-width="0.8"/><circle cx="14.8" cy="13.4" r="4.2" fill="#fff" stroke="#777" stroke-width="0.8"/><circle cx="6.4" cy="13.4" r="4.4" fill="#1b5faa"/><g transform="translate(0,27)"><path d="M5,9 L11,6.4 L17.6,9 L17.6,16 L11.4,19 L5,16Z" fill="#fff" stroke="#555" stroke-width="1"/><path d="M5,9 L11.4,11.6 L17.6,9 M11.4,11.6 L11.4,19" fill="none" stroke="#555" stroke-width="0.9"/><rect x="2" y="2.4" width="8" height="7" fill="#5d8fcf"/><path d="M2,4.8 L10,4.8 M2,7.2 L10,7.2 M4.7,2.4 L4.7,9.4 M7.4,2.4 L7.4,9.4" stroke="#e8eef8" stroke-width="0.6"/></g><g transform="translate(0,55)"><rect x="2" y="2" width="8" height="7" fill="#555"/><path d="M2,4.4 L10,4.4 M2,6.8 L10,6.8 M4.7,2 L4.7,9 M7.4,2 L7.4,9" stroke="#eee" stroke-width="0.6"/><path d="M5.4,8.6 C3.6,8.6 4.6,11.6 2.6,12.4 C4.6,13.2 3.6,16.8 5.4,16.8 M14.6,6.6 C16.4,6.6 15.4,11.2 17.4,12 C15.4,12.8 16.4,16.8 14.6,16.8" fill="none" stroke="#555" stroke-width="1.1"/><path d="M6.4,11 L10,9.6 L13.6,11 L13.6,14.6 L10,16.2 L6.4,14.6Z M6.4,11 L10,12.4 L13.6,11 M10,12.4 L10,16.2" fill="none" stroke="#555" stroke-width="0.9"/></g><g transform="translate(0,82)"><rect x="2" y="2" width="8" height="7.4" fill="#333"/><path d="M2,4.4 L10,4.4 M2,6.8 L10,6.8 M4.7,2 L4.7,9.4 M7.4,2 L7.4,9.4" stroke="#eee" stroke-width="0.6"/><path d="M4.4,9 C2.4,11.4 2.4,14.6 4.4,17 M15.6,7 C17.8,10 17.8,14 15.6,17" fill="none" stroke="#222" stroke-width="1.5"/><text x="6.4" y="15.6" font-family="Liberation Serif, serif" font-style="italic" font-weight="bold" font-size="11.5" fill="#222">x</text></g></svg>
<svg class="abs" style="left:6px;top:791px" width="19" height="14" viewBox="0 0 19 14"><path d="M1,2 L4,2 L5,1 L9,1 L10,2 L12,2 L12,6 C9,5 6,8 7.4,10.4 L1,10.4Z" fill="#222"/><circle cx="11.4" cy="8.2" r="3.3" fill="#f3f3f3" stroke="#222" stroke-width="1.5"/><path d="M13.8,10.8 L16.6,13.4" stroke="#222" stroke-width="1.8"/></svg>
<div class="abs" style="left:31.5px;top:785.5px;width:28px;height:24.5px;background:#dbdbdb"></div>
<svg class="abs" style="left:39px;top:791.5px" width="14" height="13" viewBox="0 0 14 13"><path d="M7,0.6 L7,12.4 M0.8,6.5 L13.2,6.5" stroke="#444" stroke-width="2"/></svg>
<svg class="abs" style="left:59.5px;top:785.5px" width="141" height="25" viewBox="0 0 141 25"><rect x="0" y="0" width="141" height="25" fill="#d9d9d9"/><path d="M29,0 L131,0 L138.5,12 L131,24.5 L29,24.5 L36,12Z" fill="#f1f1f1"/><path d="M0,0 L29.4,0 L36.4,12 L29.4,24.5 L0,24.5Z" fill="#e2e2e2"/><path d="M29.4,0 L36.4,12 L29.4,24.5" fill="none" stroke="#f4f4f4" stroke-width="1.2"/></svg>
<svg class="abs" style="left:67px;top:789px" width="16" height="15" viewBox="0 0 16 15"><path d="M8,1 L15.4,8.4 L13.4,8.4 L13.4,14.4 L9.6,14.4 L9.6,10 L6.4,10 L6.4,14.4 L2.6,14.4 L2.6,8.4 L0.6,8.4Z" fill="#6b6b6b"/><rect x="11.4" y="1.6" width="2.2" height="4" fill="#6b6b6b"/></svg>
<svg class="abs" style="left:103.5px;top:790px" width="16" height="12" viewBox="0 0 16 12"><path d="M0.8,1 L5.6,1 L7,2.8 L14.6,2.8 L14.6,11 L0.8,11Z" fill="#fdfdfd" stroke="#777" stroke-width="1.1" stroke-linejoin="round"/></svg>
<span class="t" style="left:124.3px;top:790.4px;font-size:12px;color:#7a7a7a;transform:scaleX(0.947);">3D Printing</span>
<div class="abs" style="left:200px;top:785.5px;width:167px;height:22px;background:#e9e9e9;border-left:1px solid #f6f6f6;border-right:1px solid #cdcdcd;border-bottom:1px solid #c4c4c4;border-radius:0 0 3px 3px"></div>
<div class="abs" style="left:368px;top:785.5px;width:168px;height:22px;background:#e9e9e9;border-left:1px solid #f6f6f6;border-right:1px solid #cdcdcd;border-bottom:1px solid #c4c4c4;border-radius:0 0 3px 3px"></div>
<div class="abs" style="left:537px;top:785.5px;width:167.5px;height:22px;background:#e9e9e9;border-left:1px solid #f6f6f6;border-right:1px solid #cdcdcd;border-bottom:1px solid #c4c4c4;border-radius:0 0 3px 3px"></div>
<div class="abs" style="left:705.5px;top:785.5px;width:167.5px;height:22px;background:#e9e9e9;border-left:1px solid #f6f6f6;border-right:1px solid #cdcdcd;border-bottom:1px solid #c4c4c4;border-radius:0 0 3px 3px"></div>
<div class="abs" style="left:874px;top:785.5px;width:168px;height:22px;background:#e9e9e9;border-left:1px solid #f6f6f6;border-right:1px solid #cdcdcd;border-bottom:1px solid #c4c4c4;border-radius:0 0 3px 3px"></div>
<div class="abs" style="left:1043px;top:785.5px;width:167.5px;height:23.5px;background:#fbfbfb;border-bottom:2px solid #2c6cb5"></div>
<div class="abs" style="left:1212px;top:785.5px;width:167.5px;height:22px;background:#e9e9e9;border-left:1px solid #f6f6f6;border-right:1px solid #cdcdcd;border-bottom:1px solid #c4c4c4;border-radius:0 0 3px 3px"></div>
<svg class="abs" style="left:208.5px;top:789.5px" width="15" height="15" viewBox="0 0 15 15"><rect x="0.7" y="0.7" width="13.6" height="13.6" rx="1.5" fill="#f4f4f4" stroke="#666" stroke-width="1.1"/><path d="M3,11.6 C5.6,9.6 7,6.4 7,3.6 C7,6.4 9,9.4 12,10 C9,9.6 5.6,10.4 3,11.6Z" fill="none" stroke="#555" stroke-width="1"/></svg>
<span class="t" style="left:227.5px;top:790.8px;font-size:12px;color:#777;transform:scaleX(0.955);">3D Printing.pdf</span>
<svg class="abs" style="left:376.5px;top:789px" width="17" height="16" viewBox="0 0 17 16"><path d="M1,2.4 L2.6,0.8 L11,0.8 L11,10.4 L1,10.4Z" fill="#f3f3f3" stroke="#666" stroke-width="1"/><path d="M4.4,4 L13.4,4 L15.4,6 L15.4,15 L6,15 L4.4,13.4Z" fill="#f3f3f3" stroke="#555" stroke-width="1.1"/><rect x="3.4" y="2.8" width="7.2" height="7.4" fill="#777"/></svg>
<span class="t" style="left:396.3px;top:790.8px;font-size:12px;color:#777;transform:scaleX(0.943);">Ender 3 3D Printer</span>
<svg class="abs" style="left:546.5px;top:789.5px" width="15" height="15" viewBox="0 0 15 15"><g fill="#f6f6f6" stroke="#666" stroke-width="1.1" stroke-linejoin="round"><path d="M1,5.6 C2.4,4.4 4.4,4.4 5.8,5.6 L5.8,13.8 L1,13.8Z"/><path d="M7,2 C8.6,0.6 11,0.6 12.6,2 L12.6,12.6 C11,13.8 9,13.8 7,12.6Z"/></g></svg>
<span class="t" style="left:565.0px;top:790.8px;font-size:12px;color:#777;transform:scaleX(0.938);">Line Width &amp; Layer Hei...</span>
<svg class="abs" style="left:715.3px;top:789.5px" width="15" height="15" viewBox="0 0 15 15"><g fill="#f6f6f6" stroke="#666" stroke-width="1.1" stroke-linejoin="round"><path d="M1,5.6 C2.4,4.4 4.4,4.4 5.8,5.6 L5.8,13.8 L1,13.8Z"/><path d="M7,2 C8.6,0.6 11,0.6 12.6,2 L12.6,12.6 C11,13.8 9,13.8 7,12.6Z"/></g></svg>
<span class="t" style="left:733.8px;top:790.8px;font-size:12px;color:#777;transform:scaleX(0.921);">Hole Size Check</span>
<svg class="abs" style="left:884.3px;top:789.5px" width="15" height="15" viewBox="0 0 15 15"><g fill="#f6f6f6" stroke="#666" stroke-width="1.1" stroke-linejoin="round"><path d="M1,5.6 C2.4,4.4 4.4,4.4 5.8,5.6 L5.8,13.8 L1,13.8Z"/><path d="M7,2 C8.6,0.6 11,0.6 12.6,2 L12.6,12.6 C11,13.8 9,13.8 7,12.6Z"/></g></svg>
<span class="t" style="left:902.5px;top:790.8px;font-size:12px;color:#777;transform:scaleX(0.953);">Part Size (Scale &amp; Split)</span>
<svg class="abs" style="left:1052.8px;top:789.5px" width="15" height="15" viewBox="0 0 15 15"><g fill="#f6f6f6" stroke="#555" stroke-width="1.1" stroke-linejoin="round"><path d="M1,5.6 C2.4,4.4 4.4,4.4 5.8,5.6 L5.8,13.8 L1,13.8Z"/><path d="M7,2 C8.6,0.6 11,0.6 12.6,2 L12.6,12.6 C11,13.8 9,13.8 7,12.6Z"/></g></svg>
<span class="t" style="left:1071.3px;top:790.8px;font-size:12px;color:#444;transform:scaleX(0.976);">Material Minimization</span>
<svg class="abs" style="left:1221px;top:790.5px" width="16" height="12" viewBox="0 0 16 12"><path d="M0.8,1 L5.6,1 L7,2.8 L14.6,2.8 L14.6,11 L0.8,11Z" fill="#fdfdfd" stroke="#666" stroke-width="1.1" stroke-linejoin="round"/></svg>
<span class="t" style="left:1240.0px;top:790.8px;font-size:12px;color:#777;transform:scaleX(0.987);">Imports</span>
</div>
</body>
</html>
